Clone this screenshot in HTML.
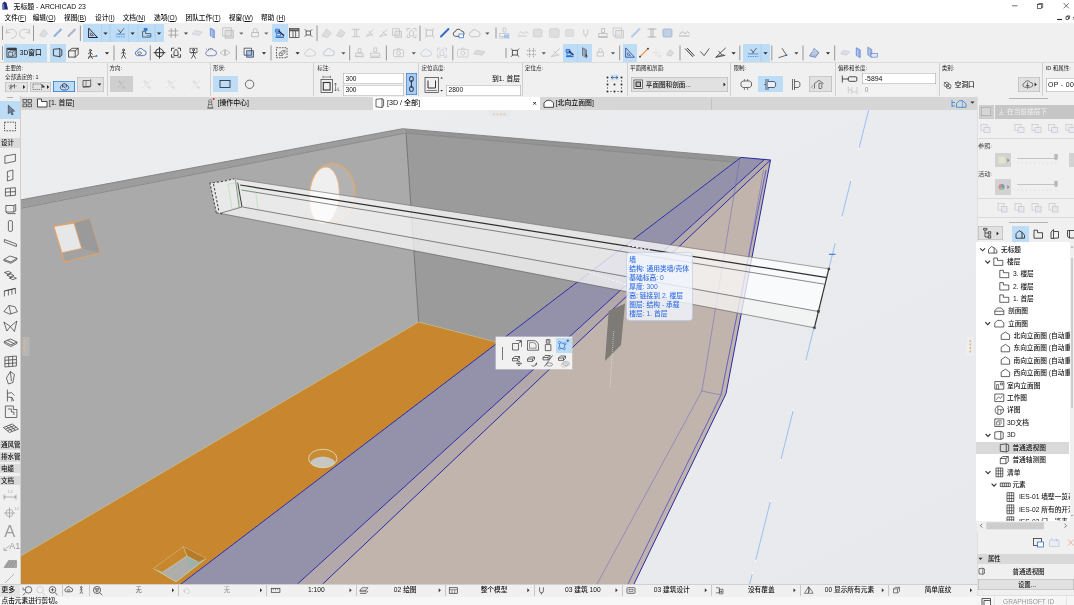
<!DOCTYPE html>
<html lang="zh"><head><meta charset="utf-8"><title>ARCHICAD 23</title><style>
html,body{margin:0;padding:0;background:#f0f0f0;}
body{width:1074px;height:605px;position:relative;overflow:hidden;font-family:"Liberation Sans","Noto Sans CJK SC",sans-serif;}
.r,.t,.abs{position:absolute;}
.t{white-space:nowrap;line-height:10px;height:10px;font-weight:500;}
.c{text-align:center;}
.rt{text-align:right;}
svg{display:block;}
#app{position:absolute;left:0;top:0;width:1074px;height:605px;overflow:hidden;filter:blur(0.3px);}
</style></head><body>
<div id="app">
<svg class="abs" style="left:0;top:0" width="1074" height="605" viewBox="0 0 1074 605">
<defs><clipPath id="vp"><rect x="20" y="110" width="957" height="474"/></clipPath><linearGradient id="sky" x1="0" y1="0" x2="1" y2="1"><stop offset="0" stop-color="#ecedef"/><stop offset="1" stop-color="#e7e9ec"/></linearGradient></defs>
<g clip-path="url(#vp)">
<rect x="20" y="110" width="957" height="474" fill="url(#sky)"/>
<polygon points="20,208 406,133 418.7,322 20,556.5" fill="#aaaaaa"/>
<polygon points="406,133 734.8,162.1 498,342.5 418.7,322" fill="#9b9b9b"/>
<polygon points="20,200 402.6,128.7 406,133 20,208" fill="#9d9d9d"/>
<polygon points="402.6,128.7 741,157.4 734.8,162.1 406,133" fill="#949494"/>
<polyline points="20,200 402.6,128.7 741,157.4" fill="none" stroke="#808080" stroke-width="0.9"/>
<polyline points="20,208.4 406,133 734.8,162.1" fill="none" stroke="#808080" stroke-width="0.8"/>
<line x1="406" y1="133" x2="418.7" y2="322" stroke="#6e6e6e" stroke-width="0.9"/>
<polygon points="418.7,322 498,342.5 181,584 20,584 20,556.5" fill="#c8862e"/>
<polyline points="20,556.5 418.7,322 498,342.5" fill="none" stroke="#c4c488" stroke-width="0.5"/>
<polygon points="770.5,160 726,393.7 634,584 321,584" fill="#c0b4ad"/>
<polygon points="741,157.4 764.7,159.2 297.5,584 181,584" fill="#9392aa"/>
<polygon points="764.7,159.2 770.5,160 322.7,584 297.5,584" fill="#b3a8aa"/>
<g fill="none" stroke="#2a2aa8" stroke-width="1.0">
<polyline points="181,584 741,157.4 770.5,160 726,393.7 634,584"/>
<line x1="764.7" y1="159.2" x2="297.5" y2="584"/>
<line x1="770.5" y1="160" x2="322.7" y2="584"/>
<polyline points="766,170 726,370 721,395 628,584" stroke-width="0.8" stroke="#4a4ac8"/>
</g>
<g fill="none" stroke="#6a62c0" stroke-width="0.5">
<polyline points="739.8,158.7 705.5,370 701.8,391 597,584"/>
<line x1="701.8" y1="391" x2="721" y2="395"/>
<line x1="763.5" y1="170" x2="741" y2="300"/>
</g>
<polygon points="608.7,311 625,303.6 621,345 605,361" fill="#7e7a76"/>
<line x1="613.7" y1="331" x2="610" y2="388" stroke="#eee" stroke-width="0.7" stroke-dasharray="0.8 1.2"/>
<polygon points="53.9,226.4 89.7,218.8 99.8,252.8 64.6,262.2" fill="#a2a2a2" stroke="#e8a060" stroke-width="1.1"/>
<polygon points="74,223.2 89.7,218.8 99.8,252.8 81.6,248.4" fill="#9a9a9a"/>
<polygon points="53.9,226.4 74,223.2 81.6,248.4 62,252.8" fill="#e6e7e8" stroke="#e8a060" stroke-width="0.8"/>
<ellipse cx="332.5" cy="192.8" rx="22.5" ry="29.2" fill="#b2b2b2" stroke="#e8a868" stroke-width="1.2"/>
<ellipse cx="324.3" cy="195.5" rx="14.8" ry="28.6" fill="#efefef" stroke="#e8b080" stroke-width="0.8" transform="rotate(4 324 196)"/>
<clipPath id="rh"><ellipse cx="322.8" cy="458.5" rx="14.2" ry="9.2"/></clipPath>
<ellipse cx="322.8" cy="458.5" rx="14.2" ry="9.2" fill="#c98a34"/>
<ellipse cx="322.8" cy="465" rx="13" ry="8.6" fill="#c6c6c2" clip-path="url(#rh)"/>
<ellipse cx="322.8" cy="458.5" rx="14.2" ry="9.2" fill="none" stroke="#dfe6c4" stroke-width="0.8"/>
<polygon points="153.5,568.5 183.4,546.8 206,558.5 176,581.8" fill="#adadab" stroke="#cfe0a8" stroke-width="0.7"/><polygon points="186.6,555 200.5,562.5 189,569" fill="#94b4ac" fill-opacity="0.75"/>
<polygon points="153.5,568.5 183.4,546.8 187,556 163,572" fill="#c8862e"/>
<polygon points="183.4,546.8 206,558.5 198,562 187,556" fill="#b87a28"/>
<polyline points="183.4,546.8 187,556 163,572" fill="none" stroke="#cfe8b8" stroke-width="0.5"/>
<line x1="187" y1="556" x2="198" y2="562" stroke="#cfe8b8" stroke-width="0.5"/>
<polygon points="210,183.2 234.5,178.8 828.8,268.9 814.4,327.8 220,213.3 216.3,212.7" fill="#ffffff" fill-opacity="0.74"/>
<polygon points="242.7,207 818.5,311.5 814.4,327.8 220,213.3" fill="#d0d2d0" fill-opacity="0.18"/>
<g fill="none" stroke="#3a3a3a" stroke-width="0.6">
<line x1="234.5" y1="178.8" x2="828.8" y2="268.9" stroke="#666" stroke-width="0.6"/>
<line x1="240.2" y1="185" x2="826.9" y2="277.6" stroke-width="1.25" stroke="#303030"/>
<line x1="241.5" y1="190" x2="824.5" y2="284.2"/>
<line x1="242.7" y1="207" x2="818.5" y2="311.5"/>
<line x1="220" y1="213.3" x2="814.4" y2="327.8" stroke="#555" stroke-width="0.6"/>
<line x1="828.8" y1="268.9" x2="814.4" y2="327.8" stroke="#333" stroke-width="1.2"/><g fill="#444"><rect x="828" y="268" width="1.8" height="1.8"/><rect x="817.6" y="310.6" width="1.8" height="1.8"/><rect x="813.4" y="327" width="1.8" height="1.8"/></g>
<line x1="237.7" y1="182.6" x2="242" y2="207" stroke-width="1"/>
<line x1="235.5" y1="180" x2="239.3" y2="208" stroke-width="0.5"/>
<polyline points="242,207 220,213.3" stroke-width="0.6"/>
</g>
<g fill="none" stroke="#4a4a4a" stroke-width="1.1" stroke-dasharray="2.4 1.7">
<polyline points="216.3,212.7 210,183.2 223.2,181.3 234.5,178.8"/>
<line x1="213.5" y1="184" x2="219" y2="212"/>
<line x1="216.3" y1="212.7" x2="222" y2="214"/>
<line x1="628" y1="245.5" x2="650" y2="250" stroke="#f4f4f4"/>
<line x1="589" y1="272" x2="628" y2="285.5" stroke="#f4f4f4"/>
</g>
<polygon points="228,184 237,183 240,207 232,209" fill="none" stroke="#8fd890" stroke-width="0.4"/>
<polyline points="241.5,190 256,193 258,212" fill="none" stroke="#8fd890" stroke-width="0.4"/>
<g stroke="#7aaaf4" stroke-width="0.7"><line x1="868.9" y1="109" x2="859.2" y2="147.6"/><line x1="850.9" y1="180.7" x2="841.9" y2="216.4"/><line x1="835.3" y1="243" x2="829.0" y2="268"/><line x1="813.9" y1="328" x2="805.8" y2="360.5"/><line x1="793.1" y1="411" x2="781.1" y2="459"/><line x1="770.3" y1="501.7" x2="755.8" y2="559.7"/><line x1="752.2" y1="574" x2="749.4" y2="585"/></g>
<g fill="#ffffff"><rect x="858.3" y="148.0" width="1.2" height="1.6"/><rect x="850.5" y="179.1" width="1.2" height="1.6"/><rect x="841.1" y="216.8" width="1.2" height="1.6"/><rect x="834.9" y="241.4" width="1.2" height="1.6"/><rect x="804.9" y="360.9" width="1.2" height="1.6"/><rect x="792.8" y="409.4" width="1.2" height="1.6"/><rect x="780.1999999999999" y="459.4" width="1.2" height="1.6"/><rect x="770.0" y="500.09999999999997" width="1.2" height="1.6"/><rect x="754.9" y="560.1" width="1.2" height="1.6"/><rect x="751.9" y="572.4" width="1.2" height="1.6"/></g>
<line x1="829" y1="254.3" x2="835.5" y2="254.3" stroke="#3a70e0" stroke-width="1.1"/>
<rect x="22.5" y="337" width="7" height="19" fill="#b6b6b6"/><rect x="966.5" y="337" width="7" height="19" fill="#eeeeee"/><g fill="#e0b888"><rect x="493" y="113.5" width="2" height="1.6"/><rect x="496.5" y="113.5" width="2" height="1.6"/><rect x="500" y="113.5" width="2" height="1.6"/><rect x="503.5" y="113.5" width="2" height="1.6"/><rect x="969.5" y="340" width="1.6" height="2"/><rect x="969.5" y="343.5" width="1.6" height="2"/><rect x="969.5" y="347" width="1.6" height="2"/><rect x="969.5" y="350.5" width="1.6" height="2"/><rect x="23.5" y="340" width="1.6" height="2"/><rect x="23.5" y="343.5" width="1.6" height="2"/><rect x="23.5" y="347" width="1.6" height="2"/><rect x="23.5" y="350.5" width="1.6" height="2"/></g>
<rect x="489" y="111" width="21" height="6" fill="#e4e4e4" opacity="0.5"/>
</g>
</svg>
<div class="r" style="left:0px;top:0px;width:1074px;height:23px;background:#fff;"></div>
<div class="r" style="left:0px;top:23px;width:1074px;height:73px;background:#f0f0f0;"></div>
<div class="r" style="left:0px;top:97.2px;width:1074px;height:12.8px;background:#d6d6d6;"></div>
<div class="r" style="left:0px;top:96px;width:20.5px;height:488px;background:#f0f0f0;"></div>
<div class="r" style="left:977px;top:96px;width:97px;height:509px;background:#f0f0f0;"></div>
<div class="r" style="left:0px;top:584px;width:977px;height:12.5px;background:#f0f0f0;"></div>
<div class="r" style="left:0px;top:596.5px;width:977px;height:8.5px;background:#f7f7f7;"></div>
<span class="t" style="left:13.5px;top:1.5px;font-size:6.9px;color:#111;">无标题 - ARCHICAD 23</span>
<span class="t" style="left:4.5px;top:13.2px;font-size:6.7px;color:#111;">文件(<u>F</u>)</span>
<span class="t" style="left:32.7px;top:13.2px;font-size:6.7px;color:#111;">编辑(<u>O</u>)</span>
<span class="t" style="left:64px;top:13.2px;font-size:6.7px;color:#111;">视图(<u>B</u>)</span>
<span class="t" style="left:95px;top:13.2px;font-size:6.7px;color:#111;">设计(<u>I</u>)</span>
<span class="t" style="left:122.7px;top:13.2px;font-size:6.7px;color:#111;">文档(<u>N</u>)</span>
<span class="t" style="left:154px;top:13.2px;font-size:6.7px;color:#111;">选项(<u>O</u>)</span>
<span class="t" style="left:185.5px;top:13.2px;font-size:6.7px;color:#111;">团队工作(<u>T</u>)</span>
<span class="t" style="left:228.8px;top:13.2px;font-size:6.7px;color:#111;">视窗(<u>W</u>)</span>
<span class="t" style="left:261px;top:13.2px;font-size:6.7px;color:#111;">帮助 (<u>H</u>)</span>
<div class="r" style="left:83.3px;top:24.3px;width:80.7px;height:17.7px;background:#bddcf5;"></div>
<div class="r" style="left:272.3px;top:24.3px;width:15.5px;height:17.7px;background:#bddcf5;"></div>
<div class="r" style="left:4.2px;top:44px;width:43px;height:17.5px;background:#bddcf5;"></div>
<span class="t" style="left:19.8px;top:47.7px;font-size:6.7px;color:#111;">3D窗口</span>
<div class="r" style="left:50px;top:44px;width:16.3px;height:17.5px;background:#bddcf5;"></div>
<div class="r" style="left:563px;top:44px;width:28.5px;height:17.5px;background:#bddcf5;"></div>
<div class="r" style="left:623px;top:44px;width:14px;height:17.5px;background:#bddcf5;"></div>
<div class="r" style="left:743px;top:44px;width:27px;height:17.5px;background:#bddcf5;"></div>
<div class="r" style="left:0px;top:62.3px;width:1074px;height:0.6px;background:#dcdcdc;"></div>
<span class="t" style="left:5px;top:62.8px;font-size:5.5px;color:#222;font-weight:400;">主要的:</span>
<span class="t" style="left:5px;top:72.2px;font-size:5.5px;color:#222;font-weight:400;">全部选定的: 1</span>
<div class="r" style="left:5px;top:81.5px;width:22.6px;height:10.5px;background:#e4e4e4;box-shadow:inset 0 0 0 0.6px #b4b4b4;"></div>
<div class="r" style="left:29.7px;top:81.5px;width:21.8px;height:10.5px;background:#e4e4e4;box-shadow:inset 0 0 0 0.6px #b4b4b4;"></div>
<div class="r" style="left:53.3px;top:81.2px;width:22.2px;height:11.2px;background:#bddcf5;box-shadow:inset 0 0 0 0.8px #2a7ad4;"></div>
<div class="r" style="left:76.7px;top:76.7px;width:27px;height:15.3px;background:#e1e1e1;box-shadow:inset 0 0 0 0.6px #b8b8b8;"></div>
<div class="r" style="left:106.6px;top:63px;width:0.6px;height:33px;background:#d0d0d0;"></div>
<span class="t" style="left:109.4px;top:62.8px;font-size:5.5px;color:#222;font-weight:400;">方向:</span>
<div class="r" style="left:110px;top:76px;width:23.2px;height:16px;background:#cfcfcf;"></div>
<div class="r" style="left:210px;top:63px;width:0.6px;height:33px;background:#d0d0d0;"></div>
<span class="t" style="left:213px;top:62.8px;font-size:5.5px;color:#222;font-weight:400;">形状:</span>
<div class="r" style="left:213px;top:76px;width:24.6px;height:16px;background:#bddcf5;"></div>
<div class="r" style="left:313px;top:63px;width:0.6px;height:33px;background:#d0d0d0;"></div>
<span class="t" style="left:317.3px;top:62.8px;font-size:5.5px;color:#222;font-weight:400;">标注:</span>
<div class="r" style="left:343px;top:73.2px;width:60.5px;height:10.6px;background:#fff;box-shadow:inset 0 0 0 0.6px #a8a8a8;"></div>
<div class="r" style="left:343px;top:84.6px;width:60.5px;height:11px;background:#fff;box-shadow:inset 0 0 0 0.6px #a8a8a8;"></div>
<span class="t" style="left:345.5px;top:73.7px;font-size:6.6px;color:#111;">300</span>
<span class="t" style="left:345.5px;top:85.3px;font-size:6.6px;color:#111;">300</span>
<div class="r" style="left:405.7px;top:73.3px;width:11.5px;height:22px;background:#a9cdf0;box-shadow:inset 0 0 0 0.7px #3c82d0;"></div>
<div class="r" style="left:418px;top:63px;width:0.6px;height:33px;background:#d0d0d0;"></div>
<span class="t" style="left:421.6px;top:62.8px;font-size:5.5px;color:#222;font-weight:400;">定位高度:</span>
<span class="t rt" style="left:400px;width:120px;top:73.8px;font-size:6.8px;color:#111;">到1. 首层</span>
<div class="r" style="left:446px;top:84.6px;width:74.5px;height:11px;background:#fff;box-shadow:inset 0 0 0 0.6px #a8a8a8;"></div>
<span class="t" style="left:448.5px;top:85.3px;font-size:6.6px;color:#111;">2800</span>
<div class="r" style="left:522px;top:63px;width:0.6px;height:33px;background:#d0d0d0;"></div>
<span class="t" style="left:525px;top:62.8px;font-size:5.5px;color:#222;font-weight:400;">定位点:</span>
<div class="r" style="left:626.7px;top:63px;width:0.6px;height:33px;background:#d0d0d0;"></div>
<span class="t" style="left:630px;top:62.8px;font-size:5.5px;color:#222;font-weight:400;">平面图和剖面:</span>
<div class="r" style="left:630.5px;top:76.7px;width:97.5px;height:15.8px;background:#e1e1e1;box-shadow:inset 0 0 0 0.6px #b4b4b4;"></div>
<span class="t" style="left:645.8px;top:79.6px;font-size:6.6px;color:#111;">平面图和剖面...</span>
<div class="r" style="left:730.3px;top:63px;width:0.6px;height:33px;background:#d0d0d0;"></div>
<span class="t" style="left:733.6px;top:62.8px;font-size:5.5px;color:#222;font-weight:400;">限制:</span>
<div class="r" style="left:758px;top:76px;width:24.6px;height:16px;background:#bddcf5;"></div>
<div class="r" style="left:808.5px;top:76px;width:23.2px;height:16px;background:#e1e1e1;box-shadow:inset 0 0 0 0.6px #b4b4b4;"></div>
<div class="r" style="left:834.7px;top:63px;width:0.6px;height:33px;background:#d0d0d0;"></div>
<span class="t" style="left:838px;top:62.8px;font-size:5.5px;color:#222;font-weight:400;">偏移和长度:</span>
<div class="r" style="left:862.3px;top:73.2px;width:74px;height:10.6px;background:#fff;box-shadow:inset 0 0 0 0.6px #a8a8a8;"></div>
<div class="r" style="left:862.3px;top:84.6px;width:74px;height:11px;background:#f3f3f3;"></div>
<span class="t" style="left:864.8px;top:73.7px;font-size:6.9px;color:#111;">-5894</span>
<span class="t" style="left:864.8px;top:85.3px;font-size:6.6px;color:#999;">0</span>
<div class="r" style="left:939px;top:63px;width:0.6px;height:33px;background:#d0d0d0;"></div>
<span class="t" style="left:941.8px;top:62.8px;font-size:5.5px;color:#222;font-weight:400;">类别:</span>
<span class="t" style="left:954.8px;top:79.8px;font-size:6.6px;color:#111;">空洞口</span>
<div class="r" style="left:1018px;top:76.7px;width:21.5px;height:15.5px;background:#e1e1e1;box-shadow:inset 0 0 0 0.6px #b4b4b4;"></div>
<div class="r" style="left:1042px;top:63px;width:0.6px;height:33px;background:#d0d0d0;"></div>
<span class="t" style="left:1045.8px;top:62.8px;font-size:5.5px;color:#222;font-weight:400;">ID 和属性:</span>
<div class="r" style="left:1045.8px;top:78px;width:30px;height:14px;background:#fff;box-shadow:inset 0 0 0 0.6px #a8a8a8;"></div>
<span class="t" style="left:1048px;top:80px;font-size:6.9px;color:#111;letter-spacing:0.35px;">OP - 003</span>
<div class="r" style="left:373px;top:97.2px;width:167px;height:12.8px;background:#fff;"></div>
<div class="r" style="left:711px;top:97.5px;width:0.6px;height:12.3px;background:#c2c2c2;"></div>
<span class="t" style="left:49px;top:98.4px;font-size:6.9px;color:#111;">[1. 首层]</span>
<span class="t" style="left:217.5px;top:98.4px;font-size:6.9px;color:#111;">[操作中心]</span>
<span class="t" style="left:387px;top:98.4px;font-size:7.1px;color:#111;">[3D / 全部]</span>
<span class="t" style="left:555.6px;top:98.4px;font-size:6.9px;color:#111;">[北向立面图]</span>
<div class="r" style="left:20.2px;top:96px;width:0.6px;height:488px;background:#cfcfcf;"></div>
<div class="r" style="left:7px;top:97.3px;width:6px;height:0.7px;background:#b0b0b0;"></div>
<div class="r" style="left:0px;top:101px;width:20px;height:18.4px;background:#bddcf5;"></div>
<div class="r" style="left:0px;top:138.4px;width:20px;height:9.4px;background:#dadada;"></div>
<span class="t" style="left:1px;top:138.29999999999998px;font-size:6.5px;color:#111;max-width:19.3px;overflow:hidden;">设计</span>
<div class="r" style="left:0px;top:440.3px;width:20px;height:9.3px;background:#dadada;"></div>
<span class="t" style="left:1px;top:440.15px;font-size:6.5px;color:#111;max-width:19.3px;overflow:hidden;">通风管</span>
<div class="r" style="left:0px;top:452.3px;width:20px;height:9.3px;background:#dadada;"></div>
<span class="t" style="left:1px;top:452.15px;font-size:6.5px;color:#111;max-width:19.3px;overflow:hidden;">排水管</span>
<div class="r" style="left:0px;top:464.2px;width:20px;height:9.3px;background:#dadada;"></div>
<span class="t" style="left:1px;top:464.04999999999995px;font-size:6.5px;color:#111;max-width:19.3px;overflow:hidden;">电缆</span>
<div class="r" style="left:0px;top:476.1px;width:20px;height:9.3px;background:#dadada;"></div>
<span class="t" style="left:1px;top:475.95px;font-size:6.5px;color:#111;max-width:19.3px;overflow:hidden;">文档</span>
<span class="t" style="left:8px;top:487.3px;font-size:3.2px;color:#999;">1.2</span>
<span class="t" style="left:14.5px;top:503.5px;font-size:3px;color:#999;">1.2</span>
<span class="t" style="left:4.2px;top:526.2px;font-size:16.5px;color:#9c9c9c;font-weight:400;">A</span>
<span class="t" style="left:9.3px;top:541px;font-size:9px;color:#9a9a9a;font-weight:400;">A1</span>
<div class="r" style="left:976.6px;top:96px;width:0.6px;height:509px;background:#e0e0e0;"></div>
<div class="r" style="left:1009px;top:98px;width:39px;height:0.7px;background:#b4b4b4;"></div>
<div class="r" style="left:979px;top:104.7px;width:15px;height:14px;background:#cdcdcd;"></div>
<div class="r" style="left:981.3px;top:106.6px;width:9.6px;height:9.6px;background:#d6d6d6;box-shadow:inset 0 0 0 0.7px #aaa;"></div>
<div class="r" style="left:995px;top:104.7px;width:79px;height:14px;background:#c6c6c6;"></div>
<span class="t" style="left:1007px;top:106.7px;font-size:6.7px;color:#f0f0f0;font-weight:400;">在当前楼层下</span>
<div class="r" style="left:977px;top:138.2px;width:97px;height:0.6px;background:#dadada;"></div>
<span class="t" style="left:978px;top:140.6px;font-size:6.2px;color:#444;font-weight:400;">参照:</span>
<div class="r" style="left:995px;top:152.7px;width:16px;height:14.8px;background:#d2d2d2;"></div>
<div class="r" style="left:1069px;top:152.7px;width:5px;height:14.8px;background:#d2d2d2;"></div>
<div class="r" style="left:1017px;top:157.5px;width:40px;height:0.8px;background:#c4c4c4;"></div>
<span class="t" style="left:978px;top:168.8px;font-size:6.2px;color:#444;font-weight:400;">活动:</span>
<div class="r" style="left:995px;top:179.2px;width:16px;height:15.4px;background:#d2d2d2;"></div>
<div class="r" style="left:1017px;top:184.3px;width:40px;height:0.8px;background:#c4c4c4;"></div>
<div class="r" style="left:977px;top:198px;width:97px;height:0.6px;background:#dadada;"></div>
<div class="r" style="left:977px;top:217px;width:97px;height:0.6px;background:#dadada;"></div>
<div class="r" style="left:1009px;top:221.6px;width:39px;height:0.7px;background:#b4b4b4;"></div>
<div class="r" style="left:978px;top:226.3px;width:24.5px;height:14px;background:#e1e1e1;box-shadow:inset 0 0 0 0.6px #b4b4b4;"></div>
<div class="r" style="left:1012px;top:225.5px;width:17px;height:16px;background:#bddcf5;"></div>
<div class="r" style="left:976.4px;top:242.4px;width:93.6px;height:279px;background:#fff;"></div>
<div class="r" style="left:1070px;top:242.4px;width:4px;height:279px;background:#f0f0f0;"></div>
<div class="r" style="left:1070.6px;top:258px;width:2.8px;height:150px;background:#cdcdcd;"></div>
<div class="r" style="left:975.9px;top:441.6px;width:93.6px;height:12.3px;background:#d9d9d9;"></div>
<span class="t" style="left:1001px;top:244.7px;font-size:6.7px;color:#111;max-width:68.5px;overflow:hidden;">无标题</span>
<span class="t" style="left:1007px;top:257.0px;font-size:6.7px;color:#111;max-width:62.5px;overflow:hidden;">楼层</span>
<span class="t" style="left:1013px;top:269.3px;font-size:6.7px;color:#111;max-width:56.5px;overflow:hidden;">3. 楼层</span>
<span class="t" style="left:1013px;top:281.59999999999997px;font-size:6.7px;color:#111;max-width:56.5px;overflow:hidden;">2. 楼层</span>
<span class="t" style="left:1013px;top:293.9px;font-size:6.7px;color:#111;max-width:56.5px;overflow:hidden;">1. 首层</span>
<span class="t" style="left:1008px;top:306.2px;font-size:6.7px;color:#111;max-width:61.5px;overflow:hidden;">剖面图</span>
<span class="t" style="left:1008px;top:318.59999999999997px;font-size:6.7px;color:#111;max-width:61.5px;overflow:hidden;">立面图</span>
<span class="t" style="left:1013.5px;top:331.0px;font-size:6.7px;color:#111;max-width:56.0px;overflow:hidden;">北向立面图 (自动重</span>
<span class="t" style="left:1013.5px;top:343.4px;font-size:6.7px;color:#111;max-width:56.0px;overflow:hidden;">东向立面图 (自动重</span>
<span class="t" style="left:1013.5px;top:355.8px;font-size:6.7px;color:#111;max-width:56.0px;overflow:hidden;">南向立面图 (自动重</span>
<span class="t" style="left:1013.5px;top:368.2px;font-size:6.7px;color:#111;max-width:56.0px;overflow:hidden;">西向立面图 (自动重</span>
<span class="t" style="left:1007px;top:380.59999999999997px;font-size:6.7px;color:#111;max-width:62.5px;overflow:hidden;">室内立面图</span>
<span class="t" style="left:1007px;top:393.0px;font-size:6.7px;color:#111;max-width:62.5px;overflow:hidden;">工作图</span>
<span class="t" style="left:1007px;top:405.4px;font-size:6.7px;color:#111;max-width:62.5px;overflow:hidden;">详图</span>
<span class="t" style="left:1007px;top:417.9px;font-size:6.7px;color:#111;max-width:62.5px;overflow:hidden;">3D文档</span>
<span class="t" style="left:1007px;top:430.4px;font-size:6.7px;color:#111;max-width:62.5px;overflow:hidden;">3D</span>
<span class="t" style="left:1012.4px;top:442.9px;font-size:6.7px;color:#111;max-width:57.10000000000002px;overflow:hidden;">普通透视图</span>
<span class="t" style="left:1012.4px;top:455.3px;font-size:6.7px;color:#111;max-width:57.10000000000002px;overflow:hidden;">普通轴测图</span>
<span class="t" style="left:1007px;top:467.59999999999997px;font-size:6.7px;color:#111;max-width:62.5px;overflow:hidden;">清单</span>
<span class="t" style="left:1012.4px;top:480.0px;font-size:6.7px;color:#111;max-width:57.10000000000002px;overflow:hidden;">元素</span>
<span class="t" style="left:1019px;top:492.3px;font-size:6.7px;color:#111;max-width:50.5px;overflow:hidden;">IES-01 墙壁一览表</span>
<span class="t" style="left:1019px;top:504.5px;font-size:6.7px;color:#111;max-width:50.5px;overflow:hidden;">IES-02 所有的开洞</span>
<span class="t" style="left:1019px;top:516.5px;font-size:6.7px;color:#111;max-width:50.5px;overflow:hidden;">IES-03 门一览表</span>
<div class="r" style="left:977px;top:553.8px;width:97px;height:9.8px;background:#d9d9d9;"></div>
<span class="t" style="left:988px;top:553.8px;font-size:6.3px;color:#111;">属性</span>
<span class="t c" style="left:968.5px;width:120px;top:566.6px;font-size:6.4px;color:#111;">普通透视图</span>
<div class="r" style="left:977.5px;top:578.6px;width:96px;height:11.6px;background:#e1e1e1;box-shadow:inset 0 0 0 0.6px #b4b4b4;"></div>
<span class="t c" style="left:967px;width:120px;top:579.6px;font-size:6.4px;color:#111;">设置...</span>
<div class="r" style="left:977px;top:595.2px;width:97px;height:9.8px;background:#f6f6f6;"></div>
<div class="r" style="left:977px;top:595px;width:97px;height:0.6px;background:#e0e0e0;"></div>
<div class="r" style="left:993.6px;top:596px;width:0.6px;height:9px;background:#e4e4e4;"></div>
<div class="r" style="left:1066px;top:596px;width:0.6px;height:9px;background:#e4e4e4;"></div>
<span class="t" style="left:1003px;top:596.6px;font-size:6.6px;color:#9a9a9a;">GRAPHISOFT ID</span>
<div class="r" style="left:0px;top:584px;width:977px;height:0.6px;background:#d0d0d0;"></div>
<div class="r" style="left:0px;top:584.5px;width:19.5px;height:12px;background:#e4e4e4;"></div>
<span class="t" style="left:1.2px;top:585.3px;font-size:7px;color:#111;">更多</span>
<div class="r" style="left:61.5px;top:585px;width:0.6px;height:11px;background:#c8c8c8;"></div>
<div class="r" style="left:89px;top:585px;width:0.6px;height:11px;background:#c8c8c8;"></div>
<span class="t c" style="left:78.69999999999999px;width:120px;top:585.3px;font-size:6.4px;color:#777;">无</span>
<div class="r" style="left:177.5px;top:585px;width:0.6px;height:11px;background:#c8c8c8;"></div>
<span class="t c" style="left:167px;width:120px;top:585.3px;font-size:6.4px;color:#999;">无</span>
<div class="r" style="left:265.8px;top:585px;width:0.6px;height:11px;background:#c8c8c8;"></div>
<span class="t c" style="left:256.3px;width:120px;top:585.3px;font-size:6.7px;color:#111;">1:100</span>
<div class="r" style="left:355.5px;top:585px;width:0.6px;height:11px;background:#c8c8c8;"></div>
<span class="t c" style="left:345.2px;width:120px;top:585.3px;font-size:6.7px;color:#111;">02 绘图</span>
<div class="r" style="left:444.8px;top:585px;width:0.6px;height:11px;background:#c8c8c8;"></div>
<span class="t c" style="left:434px;width:120px;top:585.3px;font-size:6.7px;color:#111;">整个模型</span>
<div class="r" style="left:534px;top:585px;width:0.6px;height:11px;background:#c8c8c8;"></div>
<span class="t c" style="left:522.8px;width:120px;top:585.3px;font-size:6.7px;color:#111;">03 建筑 100</span>
<div class="r" style="left:621.5px;top:585px;width:0.6px;height:11px;background:#c8c8c8;"></div>
<span class="t c" style="left:611.8px;width:120px;top:585.3px;font-size:6.7px;color:#111;">03 建筑设计</span>
<div class="r" style="left:710.8px;top:585px;width:0.6px;height:11px;background:#c8c8c8;"></div>
<span class="t c" style="left:701.3px;width:120px;top:585.3px;font-size:6.7px;color:#111;">没有覆盖</span>
<div class="r" style="left:799.6px;top:585px;width:0.6px;height:11px;background:#c8c8c8;"></div>
<span class="t c" style="left:789.4px;width:120px;top:585.3px;font-size:6.7px;color:#111;">00 显示所有元素</span>
<div class="r" style="left:887.8px;top:585px;width:0.6px;height:11px;background:#c8c8c8;"></div>
<span class="t c" style="left:878px;width:120px;top:585.3px;font-size:6.7px;color:#111;">简单底纹</span>
<span class="t" style="left:1.5px;top:596px;font-size:6.7px;color:#111;">点击元素进行剪切。</span>
<div class="r" style="left:496px;top:337.4px;width:76px;height:32px;background:#f1f1f1;box-shadow:0 0 0 0.5px #d8d8d8;"></div>
<div class="r" style="left:556px;top:338px;width:16px;height:14.5px;background:#bddcf5;"></div>
<div class="r" style="left:501.8px;top:347px;width:0.7px;height:13px;background:#777;"></div>
<div class="r" style="left:627px;top:253px;width:64.5px;height:67px;background:rgba(240,244,252,0.84);border-radius:2.5px;box-shadow:0 0 0 0.7px #c0d0ee;"></div>
<span class="t" style="left:629.3px;top:255.2px;font-size:6.75px;color:#3570e4;">墙</span>
<span class="t" style="left:629.3px;top:264.13px;font-size:6.75px;color:#3570e4;">结构: 通用类墙/壳体</span>
<span class="t" style="left:629.3px;top:273.06px;font-size:6.75px;color:#3570e4;">基础标高: 0</span>
<span class="t" style="left:629.3px;top:281.99px;font-size:6.75px;color:#3570e4;">厚度: 300</span>
<span class="t" style="left:629.3px;top:290.91999999999996px;font-size:6.75px;color:#3570e4;">高: 链接到 2. 楼层</span>
<span class="t" style="left:629.3px;top:299.84999999999997px;font-size:6.75px;color:#3570e4;">图层: 结构 - 承载</span>
<span class="t" style="left:629.3px;top:308.78px;font-size:6.75px;color:#3570e4;">楼层: 1. 首层</span>
<svg class="abs" style="left:0;top:0;pointer-events:none" width="1074" height="605" viewBox="0 0 1074 605">
<path d="M2.5,9.5 L2.5,3.5 L4.5,1.5 L6.5,3 L8,9.5 Z" fill="#1c2a6c"/><path d="M2.5,9.5 L2.5,5 L4.2,3.6 L4.6,9.5Z" fill="#5a78c8"/>
<g stroke="#333" stroke-width="0.7" fill="none"><line x1="1012" y1="5.8" x2="1017.5" y2="5.8"/><rect x="1037.5" y="4.6" width="4" height="4"/><path d="M1038.7,4.6v-1.1h4v4h-1.2"/><path d="M1063.6,3.1l5.2,5.2m0,-5.2l-5.2,5.2"/></g>
<g stroke="#222" stroke-width="0.7" fill="none"><line x1="1057.2" y1="19.5" x2="1062" y2="19.5" stroke-width="1.1"/><path d="M1073,17l1.5,1.5M1073,19.5l1.5,-1.5"/><rect x="1066" y="16.8" width="2.6" height="2.6"/><path d="M1067,16.8v-0.9h2.6v2.6h-1"/></g>
<g fill="#8c8c8c"><rect x="2.1" y="26" width="0.9" height="14"/><rect x="2.1" y="46" width="0.9" height="14"/></g>
<g fill="none" stroke="#c2c2c2" stroke-width="0.8" stroke-linecap="round" stroke-linejoin="round"><path d="M6.3,33 l0.3,-4 M6.3,33 l3.8,-0.6 M6.5,32.8 a5,4.6 0 1 1 5,5.6"/></g>
<g fill="none" stroke="#c2c2c2" stroke-width="0.8" stroke-linecap="round" stroke-linejoin="round"><path d="M29.7,33 l-0.3,-4 M29.7,33 l-3.8,-0.6 M29.5,32.8 a5,4.6 0 1 0 -5,5.6"/></g>
<line x1="33.5" y1="25.5" x2="33.5" y2="41" stroke="#8c8c8c" stroke-width="0.9"/>
<path d="M39.5,35.5 L43.5,29.5 L47.5,33 L44.5,37.0 Z" fill="#c0c4cc" fill-opacity="0.4" stroke="#c0c4cc" stroke-width="0.6"/>
<g stroke="#8eaee0" stroke-width="2" stroke-linecap="round"><line x1="54.5" y1="36.0" x2="60" y2="30.5"/></g><circle cx="60.8" cy="29.7" r="1.1" fill="#8eaee0"/>
<g stroke="#aab4c8" stroke-width="2" stroke-linecap="round"><line x1="68.5" y1="36.0" x2="74" y2="30.5"/></g><circle cx="74.8" cy="29.7" r="1.1" fill="#aab4c8"/>
<line x1="80.4" y1="25.5" x2="80.4" y2="41" stroke="#8c8c8c" stroke-width="0.9"/>
<g stroke="#a6cbea" stroke-width="0.6"><line x1="101.5" y1="24.3" x2="101.5" y2="42"/><line x1="110" y1="24.3" x2="110" y2="42"/><line x1="128.5" y1="24.3" x2="128.5" y2="42"/><line x1="137.8" y1="24.3" x2="137.8" y2="42"/><line x1="155" y1="24.3" x2="155" y2="42"/></g>
<g fill="none" stroke="#223" stroke-width="1.0" stroke-linecap="round" stroke-linejoin="round"><path d="M89,28.5 L97.5,37.5 H89 Z"/><path d="M91,33.2 L93.6,35.6 H91 Z" stroke-width="0.6"/></g>
<path d="M103.4,32.5h4.2l-2.1,2.3z" fill="#222"/>
<g fill="none" stroke-width="0.7"><path d="M116.1,34.2h8.800000000000011" stroke="#2f6fd0"/><path d="M116.1,36.8h8.800000000000011" stroke="#2f6fd0" stroke-dasharray="1.4 1"/><path d="M119.5,33.8 l4.5,-5.5" stroke="#333"/><path d="M118.0,29.5 l3,3.5" stroke="#333"/></g>
<path d="M130.5,32.5h4.2l-2.1,2.3z" fill="#222"/>
<g fill="none" stroke="#333" stroke-width="0.7"><path d="M142.6,31.39999999999999 v5.700000000000017 h8.200000000000017 v-3.5 h-5.200000000000017 v-2.5z"/><path d="M144.1,28.39999999999999h3v2h-3z" fill="#2f6fd0" stroke="#2f6fd0"/><path d="M146.6,35.7h3.5" stroke="#2f6fd0"/></g>
<path d="M156.9,32.5h4.2l-2.1,2.3z" fill="#222"/>
<g fill="none" stroke="#9a9a9a" stroke-width="0.8" stroke-linecap="round" stroke-linejoin="round"><path d="M171.2,28.39999999999999v9.200000000000017M175.4,28.39999999999999v9.200000000000017M168.7,30.89999999999999h9.200000000000017M168.7,35.10000000000001h9.200000000000017"/></g>
<path d="M183.9,32.5h4.2l-2.1,2.3z" fill="#444"/>
<path d="M192,34 L195,30.5 L202,32 L199,35.5 Z" fill="#c4c0d0" fill-opacity="0.35" stroke="#c4c0d0" stroke-width="0.5"/>
<path d="M210.35,28 l4,2.2 v7.8 l-4,-2.2 z" fill="#4a78d8" fill-opacity="0.55" stroke="#4a78d8" stroke-width="0.6"/><path d="M211.75,30v7" stroke="#fff" stroke-width="0.4"/>
<g fill="none" stroke="#b8b8b8" stroke-width="0.8" stroke-linecap="round" stroke-linejoin="round"><rect x="223.0" y="27.849999999999994" width="8.300000000000011" height="8.300000000000011"/><rect x="225.5" y="30.349999999999994" width="7.800000000000011" height="7.800000000000011" fill="#c0c0c0" fill-opacity="0.35"/></g>
<path d="M239.20000000000002,32.5h4.2l-2.1,2.3z" fill="#666"/>
<g fill="none" stroke="#b4b4b4" stroke-width="0.8" stroke-linecap="round" stroke-linejoin="round"><rect x="252" y="32.5" width="6.5" height="4.25"/><path d="M253.3,32.5 v-2 a1.9500000000000002,1.9500000000000002 0 0 1 3.9000000000000004,0 v2"/></g>
<path d="M264.2,32.5h4.2l-2.1,2.3z" fill="#666"/>
<g fill="none" stroke="#2f6fd0" stroke-width="0.8"><path d="M275.5,29.25 h4 v3 h-4z" fill="#2f6fd0" fill-opacity="0.5"/><path d="M278.5,30.75 l5.5,5.0" stroke="#224" stroke-width="1.3"/><path d="M275.5,37.25h8.5" stroke-width="1.4"/><path d="M276.5,33.5h4v2.4h-4z" /></g>
<g fill="none" stroke="#333" stroke-width="0.7"><rect x="289.5" y="28.5" width="9.5" height="9"/><path d="M289.5,30.8h9.5M293,31v6.5M295.6,31v6.5"/><path d="M289.5,30h9.5" stroke-width="1.2"/></g>
<g fill="none" stroke="#333" stroke-width="0.7" stroke-linecap="round" stroke-linejoin="round"><rect x="306.5" y="31.0" width="4.0" height="4.0"/><path d="M305.0,29.5l1.5,1.5M312.0,29.5l-1.5,1.5M305.0,36.5l1.5,-1.5M312.0,36.5l-1.5,-1.5"/></g>
<line x1="317" y1="25.5" x2="317" y2="41" stroke="#8c8c8c" stroke-width="0.9"/>
<path d="M322.0,36.05000000000001 L326.55,28.94999999999999 L331.1,33 L327.55,37.55000000000001 Z" fill="#c2c2c2" fill-opacity="0.4" stroke="#c2c2c2" stroke-width="0.6"/>
<path d="M336.5,35.69999999999999 L340.7,29.30000000000001 L344.9,33 L341.7,37.19999999999999 Z" fill="#c2c2c2" fill-opacity="0.4" stroke="#c2c2c2" stroke-width="0.6"/>
<g fill="none" stroke="#c2c2c2" stroke-width="0.8" stroke-linecap="round" stroke-linejoin="round"><path d="M352,29.25h7.5M352,36.75h7.5M354.75,29.25v7.5M356.75,29.25v7.5"/></g>
<g fill="none" stroke="#c2c2c2" stroke-width="0.8" stroke-linecap="round" stroke-linejoin="round"><path d="M373.1,29.69999999999999 L366,36.30000000000001 L372.6,34.30000000000001 M369,31.5 l3.5,4"/></g>
<g fill="none" stroke="#c2c2c2" stroke-width="0.8" stroke-linecap="round" stroke-linejoin="round"><path d="M387.1,29.5 L379.6,36.5 L386.6,34.5 M382.6,31.5 l3.5,4"/></g>
<g fill="none" stroke="#c2c2c2" stroke-width="0.8" stroke-linecap="round" stroke-linejoin="round"><rect x="392.9" y="28.69999999999999" width="6.600000000000023" height="6.600000000000023"/><rect x="395.4" y="31.19999999999999" width="6.100000000000023" height="6.100000000000023" fill="#d0d0d0" fill-opacity="0.35"/></g>
<g fill="none" stroke="#c2c2c2" stroke-width="0.8" stroke-linecap="round" stroke-linejoin="round"><path d="M407.0,31.0v-2.5h2.5M413.5,28.5h2.5v2.5M416.0,35.0v2.5h-2.5M409.5,37.5h-2.5v-2.5"/><path d="M409.5,35.5 v-3.5 l2.0,-2.5 l2.0,2.5 v3.5 z"/></g>
<line x1="420" y1="25.5" x2="420" y2="41" stroke="#8c8c8c" stroke-width="0.9"/>
<g fill="none" stroke="#b8b8b8" stroke-width="0.8" stroke-linecap="round" stroke-linejoin="round"><rect x="426.6" y="30.0" width="6.0" height="6.0"/><path d="M425.1,28.5l1.5,1.5M434.1,28.5l-1.5,1.5M425.1,37.5l1.5,-1.5M434.1,37.5l-1.5,-1.5"/></g>
<g stroke="#3a68c8" stroke-width="2" stroke-linecap="round"><line x1="441.0" y1="36.5" x2="447.5" y2="30.0"/></g><circle cx="448.3" cy="29.2" r="1.1" fill="#3a68c8"/>
<g fill="none" stroke="#333" stroke-width="0.8" stroke-linecap="round" stroke-linejoin="round"><path d="M455.0,36.25 a2.4,2.4 0 0 1 0.3,-4.7 a3.2,3.2 0 0 1 6,-0.6 a2.6,2.6 0 0 1 0.2,5.3 z"/></g>
<rect x="459" y="34" width="4.5" height="3.8" fill="#fff" stroke="#2f6fd0" stroke-width="0.7"/>
<g fill="none" stroke="#b8b8c4" stroke-width="0.8" stroke-linecap="round" stroke-linejoin="round"><path d="M471.1,36.69999999999999 a2.4,2.4 0 0 1 0.3,-4.7 a3.2,3.2 0 0 1 6,-0.6 a2.6,2.6 0 0 1 0.2,5.3 z"/></g>
<path d="M485.29999999999995,32.5h4.2l-2.1,2.3z" fill="#555"/>
<line x1="496" y1="27.5" x2="496" y2="38.5" stroke="#8c8c8c" stroke-width="0.9"/>
<g fill="none" stroke="#c0c4cc" stroke-width="0.8" stroke-linecap="round" stroke-linejoin="round"><path d="M503.5,28.0h2.5v4h-2.5z M500,33.5h9v3h-9z M499.5,38.0h10"/></g>
<rect x="504" y="34.5" width="5" height="3.5" fill="#a8c4ec"/>
<g fill="none" stroke="#c4c4c4" stroke-width="0.8" stroke-linecap="round" stroke-linejoin="round"><path d="M518.6,34 l2.5,-2.5 l2.5,2.5 l2.5,-2.5 l2,2 M518.1,36h8.399999999999977" /></g>
<rect x="533.2" y="29.100000000000023" width="8.799999999999955" height="7.7999999999999545" rx="1.5" fill="#c8c8c8" fill-opacity="0.45" stroke="#c8c8c8" stroke-width="0.6"/>
<rect x="549.5" y="28.69999999999999" width="9.600000000000023" height="8.600000000000023" rx="1.5" fill="#c8c8c8" fill-opacity="0.45" stroke="#c8c8c8" stroke-width="0.6"/>
<rect x="565.5" y="29.5" width="8" height="7" rx="1.5" fill="#cccccc" fill-opacity="0.45" stroke="#cccccc" stroke-width="0.6"/>
<g fill="none" stroke="#c0c0c0" stroke-width="0.8" stroke-linecap="round" stroke-linejoin="round"><path d="M583.75,29.75 v3.5 a2,2 0 0 0 4,0 v-3.5 M585.75,35.25v1.5"/></g>
<g fill="none" stroke="#b8b8b8" stroke-width="0.8" stroke-linecap="round" stroke-linejoin="round"><path d="M602.0,28.5h2.5v4h-2.5z M599,33.5h8v3h-8z M598.5,37.5h9"/></g>
<g fill="none" stroke="#c4c4c4" stroke-width="0.8" stroke-linecap="round" stroke-linejoin="round"><rect x="613.5" y="28.0" width="8" height="8"/><rect x="616" y="30.5" width="7.5" height="7.5" fill="#d8d8d8" fill-opacity="0.35"/></g>
<g stroke="#b4c8e8" stroke-width="2" stroke-linecap="round"><line x1="632.0" y1="36.5" x2="638.5" y2="30.0"/></g><circle cx="639.3" cy="29.2" r="1.1" fill="#b4c8e8"/>
<g fill="none" stroke="#a8a8a8" stroke-width="0.8" stroke-linecap="round" stroke-linejoin="round"><path d="M648,29.0h8M648,37.0h8M651.0,29.0v8M653.0,29.0v8"/></g>
<rect x="662.9" y="28.94999999999999" width="9.100000000000023" height="8.100000000000023" rx="1.5" fill="#8aa4d0" fill-opacity="0.45" stroke="#8aa4d0" stroke-width="0.6"/>
<g fill="none" stroke="#a8a8a8" stroke-width="0.8" stroke-linecap="round" stroke-linejoin="round"><path d="M679.8,34 l2.5,-2.5 l2.5,2.5 l2.5,-2.5 l2,2 M679.3,36h9.800000000000068" /></g>
<g fill="none" stroke="#222" stroke-width="0.8" stroke-linecap="round" stroke-linejoin="round"><rect x="7.3" y="48.2" width="9.0" height="9.0"/></g>
<rect x="7.3" y="48.2" width="9" height="1.8" fill="#333"/>
<path d="M8.6,56.2v-4l2.6,-2h4v4l-2.6,2z M8.6,52.2h4v4 M12.6,52.2l2.6,-2" fill="none" stroke="#333" stroke-width="0.6"/>
<g fill="none" stroke="#222" stroke-width="0.8" stroke-linecap="round" stroke-linejoin="round"><path d="M53.8,49.2 L59.8,48.7 V56.7 L53.8,55.7 Z M59.8,48.7 l2,1.2 V55.2 l-2,1.5"/></g>
<g fill="none" stroke="#333" stroke-width="0.8" stroke-linecap="round" stroke-linejoin="round"><path d="M68.9,50.800000000000004 l3,-2.5 h6.299999999999997 v6.299999999999997 l-3,2.5 h-6.299999999999997 z M68.9,50.800000000000004 h6.299999999999997 v6.299999999999997 M75.2,50.800000000000004 l3,-2.5"/></g>
<g fill="none" stroke="#333" stroke-width="0.8" stroke-linecap="round" stroke-linejoin="round"><circle cx="90.4" cy="50.4" r="1"/><path d="M90.4,51.6 v3.5 l-2,3.5 M90.4,55.1 l2,3.5 M88.4,53.6 l2,-1.2 l2,1.8"/></g>
<path d="M88,57.2l8,-1" stroke="#333" stroke-width="0.6"/><circle cx="96.5" cy="55.900000000000006" r="0.9" fill="#2f6fd0"/>
<path d="M104.9,52.2h4.2l-2.1,2.3z" fill="#222"/>
<line x1="114" y1="45.5" x2="114" y2="60.5" stroke="#8c8c8c" stroke-width="0.9"/>
<g fill="none" stroke="#333" stroke-width="0.8" stroke-linecap="round" stroke-linejoin="round"><circle cx="123.5" cy="50.0" r="1"/><path d="M123.5,51.2 v3.5 l-2,3.5 M123.5,54.7 l2,3.5 M121.5,53.2 l2,-1.2 l2,1.8"/></g>
<g fill="none" stroke="#2f5fb8" stroke-width="0.8" stroke-linecap="round" stroke-linejoin="round"><path d="M137.1,55.60000000000001 a2.4,2.4 0 0 1 0.3,-4.7 a3.2,3.2 0 0 1 6,-0.6 a2.6,2.6 0 0 1 0.2,5.3 z"/></g>
<ellipse cx="139.5" cy="53.2" rx="2" ry="1.3" fill="none" stroke="#333" stroke-width="0.6"/>
<line x1="150.3" y1="45.5" x2="150.3" y2="60.5" stroke="#8c8c8c" stroke-width="0.9"/>
<g fill="none" stroke="#333" stroke-width="1.0" stroke-linecap="round" stroke-linejoin="round"><circle cx="159.5" cy="52.7" r="4.0"/><path d="M154,52.7h11M159.5,47.2v11"/></g>
<g fill="none" stroke="#333" stroke-width="0.9" stroke-linecap="round" stroke-linejoin="round"><path d="M171.5,50.7v-2.5h2.5M178,48.2h2.5v2.5M180.5,54.7v2.5h-2.5M174,57.2h-2.5v-2.5"/><path d="M174,55.2 v-3.5 l2.0,-2.5 l2.0,2.5 v3.5 z"/></g>
<g fill="none" stroke="#333" stroke-width="0.8" stroke-linecap="round" stroke-linejoin="round"><circle cx="193.5" cy="50.0" r="1"/><path d="M193.5,51.2 v3.5 l-2,3.5 M193.5,54.7 l2,3.5 M191.5,53.2 l2,-1.2 l2,1.8"/></g>
<rect x="190" y="48.2" width="7" height="4.5" fill="none" stroke="#333" stroke-width="0.6"/>
<g fill="none" stroke="#5a6ea8" stroke-width="0.8" stroke-linecap="round" stroke-linejoin="round"><path d="M207.5,55.7 a2.4,2.4 0 0 1 0.3,-4.7 a3.2,3.2 0 0 1 6,-0.6 a2.6,2.6 0 0 1 0.2,5.3 z"/></g>
<path d="M206,49.2h8" stroke="#444" stroke-width="0.6" stroke-dasharray="1 1"/>
<path d="M220,52.7 l4.5,-3 v6 z M230,52.7 l-4.5,-3 v6 z" fill="none" stroke="#b0b0b0" stroke-width="0.7"/>
<line x1="236.3" y1="45.5" x2="236.3" y2="60.5" stroke="#8c8c8c" stroke-width="0.9"/>
<g fill="none" stroke="#445" stroke-width="0.8" stroke-linecap="round" stroke-linejoin="round"><rect x="244.5" y="48.2" width="7" height="7"/><rect x="247" y="50.7" width="6.5" height="6.5" fill="#2f6fd0" fill-opacity="0.35"/></g>
<path d="M261.9,52.2h4.2l-2.1,2.3z" fill="#222"/>
<line x1="271" y1="45.5" x2="271" y2="60.5" stroke="#8c8c8c" stroke-width="0.9"/>
<rect x="276.5" y="47.7" width="10.5" height="10" fill="none" stroke="#333" stroke-width="0.8" stroke-dasharray="1.6 1.1"/>
<g fill="none" stroke="#555" stroke-width="0.6" stroke-linecap="round" stroke-linejoin="round"><path d="M279.5,53.0 l3,-2.5 h2.5 v2.5 l-3,2.5 h-2.5 z M279.5,53.0 h2.5 v2.5 M282,53.0 l3,-2.5"/></g>
<path d="M295.5,52.2h4.2l-2.1,2.3z" fill="#222"/>
<g fill="none" stroke="#c8c8c8" stroke-width="0.8" stroke-linecap="round" stroke-linejoin="round"><path d="M306.5,56.05 a2.4,2.4 0 0 1 0.3,-4.7 a3.2,3.2 0 0 1 6,-0.6 a2.6,2.6 0 0 1 0.2,5.3 z"/></g>
<g fill="none" stroke="#b4bcd8" stroke-width="0.8" stroke-linecap="round" stroke-linejoin="round"><path d="M325.3,55.7 a2.4,2.4 0 0 1 0.3,-4.7 a3.2,3.2 0 0 1 6,-0.6 a2.6,2.6 0 0 1 0.2,5.3 z"/></g>
<path d="M341.29999999999995,52.2h4.2l-2.1,2.3z" fill="#555"/>
<line x1="349.7" y1="45.5" x2="349.7" y2="60.5" stroke="#8c8c8c" stroke-width="0.9"/>
<g fill="none" stroke="#c0c0c0" stroke-width="0.8" stroke-linecap="round" stroke-linejoin="round"><path d="M358.5,48.7h2.5v4h-2.5z M356,53.2h7v3h-7z M355.5,56.7h8"/></g>
<g fill="none" stroke="#c0c0c0" stroke-width="0.8" stroke-linecap="round" stroke-linejoin="round"><path d="M374.3,47.89999999999999h2.5v4h-2.5z M371,53.2h8.600000000000023v3h-8.600000000000023z M370.5,57.500000000000014h9.600000000000023"/></g>
<line x1="386.4" y1="45.5" x2="386.4" y2="60.5" stroke="#8c8c8c" stroke-width="0.9"/>
<g fill="none" stroke="#c0c0c0" stroke-width="0.8" stroke-linecap="round" stroke-linejoin="round"><rect x="393.5" y="49.7" width="10" height="7" rx="1"/><circle cx="398.5" cy="53.2" r="2"/><path d="M397.0,49.7l0.7,-1.3h1.8l0.7,1.3"/></g>
<path d="M411.7,52.2h4.2l-2.1,2.3z" fill="#555"/>
<g fill="none" stroke="#c4cce0" stroke-width="0.8" stroke-linecap="round" stroke-linejoin="round"><path d="M422.5,56.2 a2.4,2.4 0 0 1 0.3,-4.7 a3.2,3.2 0 0 1 6,-0.6 a2.6,2.6 0 0 1 0.2,5.3 z"/></g>
<g fill="none" stroke="#c8c8d4" stroke-width="0.8" stroke-linecap="round" stroke-linejoin="round"><path d="M437.5,50.7v-2.5h2.5M444,48.2h2.5v2.5M446.5,54.7v2.5h-2.5M440,57.2h-2.5v-2.5"/><path d="M440,55.2 v-3.5 l2.0,-2.5 l2.0,2.5 v3.5 z"/></g>
<line x1="452.8" y1="45.5" x2="452.8" y2="60.5" stroke="#8c8c8c" stroke-width="0.9"/>
<g fill="none" stroke="#cccccc" stroke-width="0.8" stroke-linecap="round" stroke-linejoin="round"><rect x="457.5" y="49.39999999999999" width="10.600000000000023" height="7.600000000000023" rx="1"/><circle cx="462.8" cy="53.2" r="2"/><path d="M461.3,49.39999999999999l0.7,-1.3h1.8l0.7,1.3"/></g>
<path d="M473.6,53.7 L476.6,50.2 L485,51.7 L482,55.2 Z" fill="#bbbbbb" fill-opacity="0.35" stroke="#bbbbbb" stroke-width="0.5"/>
<line x1="506" y1="48" x2="506" y2="58" stroke="#888" stroke-width="0.9"/>
<g fill="none" stroke="#333" stroke-width="0.8" stroke-linecap="round" stroke-linejoin="round"><rect x="512.8" y="50.40000000000002" width="4.599999999999966" height="4.599999999999966"/><path d="M511.3,48.90000000000002l1.5,1.5M518.9,48.90000000000002l-1.5,1.5M511.3,56.499999999999986l1.5,-1.5M518.9,56.499999999999986l-1.5,-1.5"/></g>
<g fill="none" stroke="#888" stroke-width="0.7" stroke-dasharray="1.6 1"><path d="M529.4,48.14999999999999v9.100000000000023M533.5,48.14999999999999v9.100000000000023M526.9,50.64999999999999h9.100000000000023M526.9,54.750000000000014h9.100000000000023"/></g>
<path d="M541.6999999999999,52.2h4.2l-2.1,2.3z" fill="#555"/>
<g fill="none" stroke="#c0c0c0" stroke-width="0.8" stroke-linecap="round" stroke-linejoin="round"><path d="M559.5,48.7 L551,56.7 L559,54.7 M554,51.2 l3.5,4"/></g>
<line x1="577.5" y1="44" x2="577.5" y2="61.5" stroke="#a6cbea" stroke-width="0.6"/>
<g fill="none" stroke="#2f6fd0" stroke-width="0.8"><path d="M566,49.45 h4 v3 h-4z" fill="#2f6fd0" fill-opacity="0.5"/><path d="M569,50.95 l4.5,4.0" stroke="#224" stroke-width="1.3"/><path d="M566,56.45h7.5" stroke-width="1.4"/><path d="M567,53.2h4v2.4h-4z" /></g>
<path d="M582.5,47.7 l4,2.2 v7.8 l-4,-2.2 z" fill="#556" fill-opacity="0.55" stroke="#556" stroke-width="0.6"/><path d="M583.9,49.7v7" stroke="#fff" stroke-width="0.4"/>
<path d="M585,53.7l3,2.5l-1.8,0.3z" fill="#222"/>
<g fill="none" stroke="#c0c0c0" stroke-width="0.8" stroke-linecap="round" stroke-linejoin="round"><rect x="597.6" y="52.2" width="5.7999999999999545" height="3.8999999999999773"/><path d="M598.9,52.2 v-2 a1.5999999999999774,1.5999999999999774 0 0 1 3.199999999999955,0 v2"/></g>
<path d="M610.9,52.2h4.2l-2.1,2.3z" fill="#555"/>
<line x1="619.7" y1="45.5" x2="619.7" y2="60.5" stroke="#8c8c8c" stroke-width="0.9"/>
<g fill="none" stroke="#2a3a88" stroke-width="0.8" stroke-linecap="round" stroke-linejoin="round"><path d="M626,48.2 L634.5,57.2 H626 Z"/><path d="M628,52.900000000000006 L630.6,55.300000000000004 H628 Z" stroke-width="0.6"/></g>
<line x1="640" y1="56.7" x2="648" y2="48.7" stroke="#e88a3a" stroke-width="1.1"/><circle cx="640" cy="56.7" r="0.9" fill="#333"/><circle cx="648" cy="48.7" r="0.9" fill="#333"/>
<path d="M652,52.7h8M656,48.7v8" stroke="#ecd8c4" stroke-width="0.7"/><path d="M658,54.7l3,3m0,-3l-3,3" stroke="#c8c8c8" stroke-width="0.6"/>
<path d="M666.5,54.7 L670.0,49.7 L673.5,52.7 L671.0,56.2 Z" fill="#c0c0c0" fill-opacity="0.4" stroke="#c0c0c0" stroke-width="0.6"/>
<line x1="680" y1="45.5" x2="680" y2="60.5" stroke="#8c8c8c" stroke-width="0.9"/>
<g fill="none" stroke="#333" stroke-width="0.8" stroke-linecap="round" stroke-linejoin="round"><path d="M685.5,48.89999999999999 l7.100000000000023,7.600000000000023 M687.5,48.39999999999999 l6.600000000000023,7.100000000000023" stroke-width="1"/></g>
<g fill="none" stroke="#333" stroke-width="0.8" stroke-linecap="round" stroke-linejoin="round"><path d="M700.6,51.7 l3.5,4 l4.899999999999977,-6.899999999999977" /></g>
<g fill="none" stroke="#333" stroke-width="0.8" stroke-linecap="round" stroke-linejoin="round"><path d="M725.5,48.050000000000026 L715.7,57.34999999999998 L725,55.34999999999998 M718.7,51.2 l3.5,4"/></g>
<path d="M716,56.7l8,-2.2" stroke="#333" stroke-width="0.6"/>
<path d="M731.5,52.2h4.2l-2.1,2.3z" fill="#222"/>
<line x1="739.8" y1="45.5" x2="739.8" y2="60.5" stroke="#8c8c8c" stroke-width="0.9"/>
<line x1="761" y1="44" x2="761" y2="61.5" stroke="#a6cbea" stroke-width="0.6"/>
<g fill="none" stroke-width="0.7"><path d="M747.9,53.900000000000006h10.399999999999977" stroke="#2f6fd0"/><path d="M747.9,56.5h10.399999999999977" stroke="#2f6fd0" stroke-dasharray="1.4 1"/><path d="M752.0999999999999,53.5 l4.5,-5.5" stroke="#333"/><path d="M750.5999999999999,49.2 l3,3.5" stroke="#333"/></g>
<path d="M763.4,52.2h4.2l-2.1,2.3z" fill="#222"/>
<line x1="771.8" y1="45.5" x2="771.8" y2="60.5" stroke="#8c8c8c" stroke-width="0.9"/>
<path d="M782,48.2 l4.5,7 l-8,2.5" fill="none" stroke="#444" stroke-width="0.8"/><circle cx="786.5" cy="55.2" r="0.9" fill="#2f6fd0"/>
<path d="M794.3,52.2h4.2l-2.1,2.3z" fill="#444"/>
<line x1="803" y1="45.5" x2="803" y2="60.5" stroke="#8c8c8c" stroke-width="0.9"/>
<path d="M809.5,55.95 L814.25,48.45 L819.0,52.7 L815.25,57.45 Z" fill="#4a6ab8" fill-opacity="0.4" stroke="#4a6ab8" stroke-width="0.6"/>
<path d="M811,51.7l5,-1.5M812,53.900000000000006l5,-1.5" stroke="#fff" stroke-width="0.5"/>
<path d="M825.9,52.2h4.2l-2.1,2.3z" fill="#222"/>
<line x1="834.7" y1="45.5" x2="834.7" y2="60.5" stroke="#8c8c8c" stroke-width="0.9"/>
<path d="M840.5,53.7 L843.5,50.2 L849.7,51.7 L846.7,55.2 Z" fill="#c0b8d8" fill-opacity="0.35" stroke="#c0b8d8" stroke-width="0.5"/>
<path d="M856.25,47.7 l4,2.2 v7.8 l-4,-2.2 z" fill="#4a78d8" fill-opacity="0.55" stroke="#4a78d8" stroke-width="0.6"/><path d="M857.65,49.7v7" stroke="#fff" stroke-width="0.4"/>
<path d="M867.75,47.2 l4,2.2 v7.8 l-4,-2.2 z" fill="#5a80d0" fill-opacity="0.55" stroke="#5a80d0" stroke-width="0.6"/><path d="M869.15,49.2v7" stroke="#fff" stroke-width="0.4"/>
<rect x="871" y="53.5" width="6.3" height="3.6" fill="#dfe8f8" stroke="#2f5fb8" stroke-width="0.5"/>
<g fill="none" stroke="#333" stroke-width="0.6"><path d="M9,88.5l5,-3m-3,-1.2v5.5M14.5,84v4.5" /><path d="M8.5,86h8" stroke-dasharray="1 0.8"/><rect x="33" y="84" width="8.5" height="5.5" stroke-dasharray="1.3 0.9"/><path d="M42,84.5l2.5,2.5l-2,0.4z" fill="#222"/></g>
<path d="M23,85v4l2.2,-2z" fill="#222"/>
<path d="M47,85v4l2.2,-2z" fill="#222"/>
<g fill="none" stroke="#224" stroke-width="0.7"><ellipse cx="64.5" cy="87.5" rx="4.2" ry="2.6"/><path d="M62.5,87.5v-3.2l2,-0.8l2.2,1.2v2.6" fill="#9fbce8" stroke="#223"/><path d="M63.2,86.3l2.5,2" /></g>
<g fill="none" stroke="#333" stroke-width="0.7"><path d="M83,80.5h6.5l1.2,-0.8v6.5l-1.2,0.8h-6.5z"/><path d="M83,87l7.7,-0.8" /><path d="M86,80.5v6.3" stroke-width="0.5"/></g>
<path d="M97.2,83.5h4.2l-2.1,2.3z" fill="#222"/>
<g stroke="#a8a8a8" stroke-width="0.6" fill="none"><path d="M116.6,88.5l10,-9" stroke-dasharray="1.2 0.9"/><path d="M118.1,81.5l3,2.5M122.6,85.5l3,2.5"/><path d="M119.1,80.5l3,2.5M121.8,86.5l3,2.5"/></g>
<g stroke="#c4c4c4" stroke-width="0.6" fill="none"><path d="M142,88.5l10,-9" stroke-dasharray="1.2 0.9"/><path d="M143.5,81.5l3,2.5M148,85.5l3,2.5"/><path d="M144.5,80.5l3,2.5M147.2,86.5l3,2.5"/></g>
<g stroke="#c4c4c4" stroke-width="0.6" fill="none"><path d="M166,88.5l10,-9" stroke-dasharray="1.2 0.9"/><path d="M167.5,81.5l3,2.5M172,85.5l3,2.5"/><path d="M168.5,80.5l3,2.5M171.2,86.5l3,2.5"/></g>
<g stroke="#c4c4c4" stroke-width="0.6" fill="none"><path d="M191,88.5l10,-9" stroke-dasharray="1.2 0.9"/><path d="M192.5,81.5l3,2.5M197,85.5l3,2.5"/><path d="M193.5,80.5l3,2.5M196.2,86.5l3,2.5"/></g>
<rect x="220" y="80.5" width="10" height="7" fill="none" stroke="#223" stroke-width="0.8"/><circle cx="249.6" cy="84.3" r="4.2" fill="none" stroke="#333" stroke-width="0.7"/>
<g fill="none" stroke="#333" stroke-width="0.7"><rect x="321" y="79.5" width="11.5" height="13"/><rect x="323.3" y="82.5" width="6.8" height="7.5" stroke-width="1.1"/><path d="M323,75.8v2.3M330.5,75.8v2.3M323,77h7.5" stroke-width="0.5"/><path d="M335.5,83v8M334.3,84.5l1.2,-1.5l1.2,1.5M334.3,89.5l1.2,1.5l1.2,-1.5" stroke-width="0.5"/><path d="M338,87.5v3h1.5" stroke-width="0.5"/></g>
<g fill="none" stroke="#223" stroke-width="0.9"><rect x="409.6" y="76.5" width="3.6" height="5" rx="1.6"/><rect x="409.6" y="86.5" width="3.6" height="5" rx="1.6"/><path d="M411.4,80v8"/></g>
<g fill="none" stroke="#333" stroke-width="0.7"><rect x="425" y="77.5" width="13.5" height="15"/><path d="M428,80.5v7.5h7.5v-7.5" stroke-width="1"/><path d="M426.5,90.5h10.5" stroke-width="0.6"/></g><path d="M440.3,78.5h2.6l-1.3,-1.6z M440.3,90h2.6l-1.3,1.6z" fill="#222"/>
<g fill="#222"><rect x="606.65" y="76.65" width="1.7" height="1.7"/><rect x="606.65" y="83.65" width="1.7" height="1.7"/><rect x="606.65" y="90.65" width="1.7" height="1.7"/><rect x="613.65" y="76.65" width="1.7" height="1.7"/><rect x="613.65" y="83.65" width="1.7" height="1.7"/><rect x="613.65" y="90.65" width="1.7" height="1.7"/><rect x="620.65" y="76.65" width="1.7" height="1.7"/><rect x="620.65" y="83.65" width="1.7" height="1.7"/><rect x="620.65" y="90.65" width="1.7" height="1.7"/></g>
<rect x="610.5" y="74.5" width="8" height="6" fill="#cce4f7"/><path d="M611,77.5h7M613,76l-2,1.5l2,1.5M616,76l2,1.5l-2,1.5" fill="none" stroke="#224" stroke-width="0.5"/><g stroke="#222" stroke-width="0.5"><path d="M607.5,80v2M607.5,87v2M621.5,80v2M621.5,87v2M610,91.5h2M617,91.5h2"/></g>
<rect x="634" y="80" width="8.6" height="8.6" fill="#fff" stroke="#333" stroke-width="0.7"/><rect x="636" y="82" width="4.6" height="4.6" fill="#bbb" stroke="#222" stroke-width="1"/>
<path d="M723.5,82.6v4l2.2,-2z" fill="#222"/>
<g fill="none" stroke="#333" stroke-width="0.7"><path d="M743,81h6.5l2,1.5v3.5l-2,1.5h-6.5l-2,-1.5v-3.5z" fill="none"/><path d="M744.4,79v2M747.6,79v2M744.4,88v2M747.6,88v2" stroke-width="0.6"/></g>
<g fill="none" stroke="#223" stroke-width="0.7"><path d="M766,79v11M768,79v11"/><path d="M768,81.5h6l1.6,1.3v3.4l-1.6,1.3h-6" fill="#e8f0fa"/><path d="M764,84.5h2" stroke-dasharray="0.8 0.6"/></g>
<g fill="none" stroke="#333" stroke-width="0.7"><path d="M792.5,79v11M794.5,79v11"/><path d="M794.5,81.5h3.8l1.6,1.3v3.4l-1.6,1.3h-3.8"/></g>
<g fill="none" stroke="#444" stroke-width="0.7"><path d="M814.5,88.5v-5l4.5,-3.2l4.5,3.2"/><path d="M819,88.5v-5.2h2.6a2,2 0 0 1 0,2.6a2,2 0 0 1 -0.4,2.6z"/><path d="M813,85.5l-1.4,1.6l1.6,1.4" stroke-dasharray="1 0.8"/></g>
<g fill="none" stroke="#222" stroke-width="0.8"><path d="M842.3,75.5v7M842.3,79h6"/><rect x="848.3" y="76.8" width="8.5" height="4.5" rx="1"/></g><g fill="none" stroke="#c4c4c4" stroke-width="0.7"><path d="M848.3,86.5v7M848.3,90h3.5"/><path d="M851.8,87v5h5.2v-5M851.8,92v2.4M857,92v2.4"/></g>
<g fill="none" stroke="#333" stroke-width="0.6"><circle cx="946.5" cy="84.5" r="2.4"/><circle cx="948.6" cy="86.3" r="2.4"/><path d="M943.8,81.8l6.8,6.8"/></g>
<g fill="none" stroke="#444" stroke-width="0.7"><path d="M1024.5,87.2a2.2,2.2 0 0 1 0.2,-4.3a3,3 0 0 1 5.6,-0.5a2.4,2.4 0 0 1 0.2,4.8z"/><path d="M1027.6,82.5v6.3M1026,85.5h3.2"/></g>
<path d="M1034.6,82.5v4l2.2,-2z" fill="#222"/>
<g fill="none" stroke="#333" stroke-width="0.7"><rect x="23" y="99.5" width="3.6" height="2.8"/><rect x="28" y="99.5" width="3.6" height="2.8"/><rect x="23" y="104" width="3.6" height="2.8"/><rect x="28" y="104" width="3.6" height="2.8"/></g>
<path d="M37.5,107v-8h4v2.5h5.5v5.5z" fill="#fff" stroke="#222" stroke-width="0.8"/>
<g fill="none" stroke="#444" stroke-width="0.6"><path d="M208,108l1,-6h2.5l1,6zM207,108h6.5M208.7,102v-1.5l1.5,-1l1.5,1v1.5M208.4,104.5h3.3"/></g><circle cx="213.6" cy="99" r="1.1" fill="#e03020"/>
<path d="M376,99.3l6,-0.6l1.6,1v6.4l-1.6,1.4l-6,-0.7z M382,98.7v8.8" fill="none" stroke="#222" stroke-width="0.7"/>
<path d="M533.3,102l2.6,2.6m0,-2.6l-2.6,2.6" stroke="#111" stroke-width="0.9"/>
<path d="M544,107.3v-4.5l3,-2.5h3.5l3,2.5v4.5z" fill="#fff" stroke="#222" stroke-width="0.8"/>
<g fill="none" stroke="#2f7fd8" stroke-width="0.8"><path d="M952,100v7M952,102.5h3M952,106h3"/><path d="M956.5,107.3v-4l3,-2.6h3l3.5,3v3.6z"/><path d="M962.5,100.7v6.6" stroke-width="0.5"/></g>
<path d="M970.3,101.5h4.2l-2.1,2.3z" fill="#333"/>
<path d="M8.3,105.2v8.6l2.1,-2l1.5,3.1l1.3,-0.6l-1.5,-3l2.9,-0.2z" fill="#7a8496" stroke="#3a4254" stroke-width="0.7"/>
<rect x="4.5" y="122.2" width="11" height="8.6" fill="none" stroke="#333" stroke-width="0.8" stroke-dasharray="1.6 1.1"/>
<g fill="none" stroke="#333" stroke-width="0.7" stroke-linejoin="round" transform="translate(0.4,0)"><path d="M4.5,156l10.5,-1.8v7l-10.5,2.2z"/></g>
<g fill="none" stroke="#333" stroke-width="0.7" stroke-linejoin="round" transform="translate(0.4,0)"><path d="M7,171.5l5.5,-1.5v9.5l-5.5,1.5z"/><path d="M8.5,176v1.2" /></g>
<g fill="none" stroke="#333" stroke-width="0.7" stroke-linejoin="round" transform="translate(0.4,0)"><path d="M5,188.5l10,-0.8v7.6l-10,0.8zM10,188v8M5,192.2l10,-0.6"/></g>
<g fill="none" stroke="#333" stroke-width="0.7" stroke-linejoin="round" transform="translate(0.4,0)"><path d="M5.5,205.5h8v6.5h-8zM13.5,205.5l1.8,-1v6.5l-1.8,1M5.5,212l1.8,1.6h8"/></g>
<g fill="none" stroke="#333" stroke-width="0.7" stroke-linejoin="round" transform="translate(0.4,0)"><path d="M8,221.5a2,0.9 0 0 1 4,0v9a2,0.9 0 0 1 -4,0z"/></g>
<g fill="none" stroke="#333" stroke-width="0.7" stroke-linejoin="round" transform="translate(0.4,0)"><path d="M4,239.5l12,4.5v2.5l-12,-4.5z"/></g>
<g fill="none" stroke="#333" stroke-width="0.7" stroke-linejoin="round" transform="translate(0.4,0)"><path d="M3.5,259.5l6,-3.5l7,2.2l-6,3.8zM3.5,259.5v1.2l7,2.6l6,-3.8v-1.3"/></g>
<g fill="none" stroke="#333" stroke-width="0.7" stroke-linejoin="round" transform="translate(0.4,0)"><path d="M4,272.5l4,-1.2l3,1.5l-3.5,1.3zM6.5,275.2l4,-1.2l3,1.5l-3.5,1.3zM9,278l4,-1.2l3,1.5l-3.5,1.3zM7.5,274.2v1.3M10,277v1.3"/></g>
<g fill="none" stroke="#333" stroke-width="0.7" stroke-linejoin="round" transform="translate(0.4,0)"><path d="M4,296.5v-5.5l11,-2.6v5.5M4,291l11,-2.6M8,295.5v-5.4M11.5,294.6v-5.4"/></g>
<g fill="none" stroke="#333" stroke-width="0.7" stroke-linejoin="round" transform="translate(0.4,0)"><path d="M3.5,311.5l5,-6l6,1.2l2.5,5l-7.5,2.5z M8.5,305.5l2,8.5"/></g>
<g fill="none" stroke="#333" stroke-width="0.7" stroke-linejoin="round" transform="translate(0.4,0)"><path d="M3.5,322l6.5,4.5l6.5,-5.5l-2.5,10.5l-4,-5l-3.5,4.5z"/></g>
<g fill="none" stroke="#333" stroke-width="0.7" stroke-linejoin="round" transform="translate(0.4,0)"><path d="M4,341.5l6,-2.5l6.5,3l-6,3zM4,341.5v1.6l6.5,3.4l6,-3v-1.5 M7,340.3l6.5,3.2"/></g>
<g fill="none" stroke="#333" stroke-width="0.7" stroke-linejoin="round" transform="translate(0.4,0)"><path d="M4.5,357v10l11.5,-1v-10zM8.3,356.7v10M12.2,356.3v10M4.5,360.3l11.5,-0.8M4.5,363.7l11.5,-0.8"/></g>
<g fill="none" stroke="#333" stroke-width="0.7" stroke-linejoin="round" transform="translate(0.4,0)"><path d="M8,384l-2,-6l4,-6.5l4,3l-1.5,8z M10,371.5l1,9.5"/></g>
<g fill="none" stroke="#333" stroke-width="0.7" stroke-linejoin="round" transform="translate(0.4,0)"><path d="M7,389.5v7.5l4.5,0.5l2,3.5M7,393.5l4,-1l3,3M7,397v4.5M11.5,397.5v4"/></g>
<g fill="none" stroke="#333" stroke-width="0.7" stroke-linejoin="round" transform="translate(0.4,0)"><path d="M5,406h8v3.5h3.5v8h-11.5zM7.5,409h3.5v3h2.5v3"/></g>
<g fill="none" stroke="#333" stroke-width="0.7" stroke-linejoin="round" transform="translate(0.4,0)"><path d="M3,427.5l9,-3.5l6,5l-9,3.5zM6,426.4l6,5M9,425.2l6,5M5,429l9,-3.4M7,430.7l9,-3.4"/></g>
<g fill="none" stroke="#9a9a9a" stroke-width="0.7"><path d="M4,497h12M4,494.5v5M16,494.5v5M5.5,495.8l-1.5,1.2l1.5,1.2M14.5,495.8l1.5,1.2l-1.5,1.2"/></g>
<g fill="none" stroke="#9a9a9a" stroke-width="0.7"><circle cx="9.5" cy="513" r="3.6"/><path d="M4,513h11M9.5,507.5v11"/></g>
<g fill="none" stroke="#9a9a9a" stroke-width="0.7"><path d="M4,550.5l5.5,-5M4,550.5v-3.2M4,550.5h3.2"/></g>
<path d="M4,567.5l4.5,-7h8v7z" fill="#a8a8a8" stroke="#888" stroke-width="0.6"/><path d="M6,567l4,-6M9,567l4,-6M12,567l4,-6" stroke="#777" stroke-width="0.5"/>
<g fill="none" stroke="#9a9a9a" stroke-width="0.7"><path d="M5,583l9,-9"/></g>
<path d="M999,114.5h5M1001.5,108.5v5M1000,112l1.5,1.6l1.5,-1.6" fill="none" stroke="#eee" stroke-width="0.6"/>
<g fill="none" stroke="#c2c6cc" stroke-width="0.7"><rect x="981" y="124.5" width="6" height="6"/><rect x="984" y="127.5" width="6" height="5" fill="#e8ecf2"/></g>
<g fill="none" stroke="#c2c6cc" stroke-width="0.7"><rect x="1015" y="124.5" width="6" height="6"/><rect x="1018" y="127.5" width="6" height="5" fill="#e8ecf2"/></g>
<g fill="none" stroke="#c2c6cc" stroke-width="0.7"><rect x="1032" y="124.5" width="6" height="6"/><rect x="1035" y="127.5" width="6" height="5" fill="#e8ecf2"/></g>
<g fill="none" stroke="#c2c6cc" stroke-width="0.7"><rect x="1048.7" y="124.5" width="6" height="6"/><rect x="1051.7" y="127.5" width="6" height="5" fill="#e8ecf2"/></g>
<g fill="none" stroke="#c2c6cc" stroke-width="0.7"><rect x="1066" y="124.5" width="6" height="6"/><rect x="1069" y="127.5" width="6" height="5" fill="#e8ecf2"/></g>
<rect x="998.5" y="156.5" width="6.5" height="7" fill="#e8e8c8" opacity="0.8"/>
<path d="M1007.3,158.3v4l2.2,-2z" fill="#888"/>
<path d="M1054.3,154.0h3.4v5l-1.7,1.6l-1.7,-1.6z" fill="#b8b8b8"/>
<g stroke="#cfcfcf" stroke-width="0.5"><line x1="1018.0" y1="162.5" x2="1018.0" y2="164.1"/><line x1="1022.2" y1="162.5" x2="1022.2" y2="164.1"/><line x1="1026.4" y1="162.5" x2="1026.4" y2="164.1"/><line x1="1030.6" y1="162.5" x2="1030.6" y2="164.1"/><line x1="1034.8" y1="162.5" x2="1034.8" y2="164.1"/><line x1="1039.0" y1="162.5" x2="1039.0" y2="164.1"/><line x1="1043.2" y1="162.5" x2="1043.2" y2="164.1"/><line x1="1047.4" y1="162.5" x2="1047.4" y2="164.1"/><line x1="1051.6" y1="162.5" x2="1051.6" y2="164.1"/><line x1="1055.8" y1="162.5" x2="1055.8" y2="164.1"/></g>
<circle cx="1001.5" cy="187" r="3" fill="#d88"/><path d="M1001.5,187v-3a3,3 0 0 1 2.6,4.5z" fill="#6a9ad8"/><path d="M1001.5,187l2.6,1.5a3,3 0 0 1 -4.5,0.8z" fill="#8c8"/>
<path d="M1007.3,185v4l2.2,-2z" fill="#888"/>
<path d="M1054.3,180.8h3.4v5l-1.7,1.6l-1.7,-1.6z" fill="#b8b8b8"/>
<g stroke="#cfcfcf" stroke-width="0.5"><line x1="1018.0" y1="189.3" x2="1018.0" y2="190.9"/><line x1="1022.2" y1="189.3" x2="1022.2" y2="190.9"/><line x1="1026.4" y1="189.3" x2="1026.4" y2="190.9"/><line x1="1030.6" y1="189.3" x2="1030.6" y2="190.9"/><line x1="1034.8" y1="189.3" x2="1034.8" y2="190.9"/><line x1="1039.0" y1="189.3" x2="1039.0" y2="190.9"/><line x1="1043.2" y1="189.3" x2="1043.2" y2="190.9"/><line x1="1047.4" y1="189.3" x2="1047.4" y2="190.9"/><line x1="1051.6" y1="189.3" x2="1051.6" y2="190.9"/><line x1="1055.8" y1="189.3" x2="1055.8" y2="190.9"/></g>
<g fill="none" stroke="#c2c6cc" stroke-width="0.7"><rect x="998" y="203.5" width="6" height="6.5"/><rect x="1001.5" y="206.5" width="5.5" height="5.5" fill="#e4e8ee"/></g>
<g fill="none" stroke="#c2c6cc" stroke-width="0.7"><rect x="1015" y="203.5" width="6" height="6.5"/><rect x="1018.5" y="206.5" width="5.5" height="5.5" fill="#e4e8ee"/></g>
<g fill="none" stroke="#c2c6cc" stroke-width="0.7"><rect x="1032" y="203.5" width="6" height="6.5"/><rect x="1035.5" y="206.5" width="5.5" height="5.5" fill="#e4e8ee"/></g>
<g fill="none" stroke="#c2c6cc" stroke-width="0.7"><rect x="1049" y="203.5" width="6" height="6.5"/><rect x="1052.5" y="206.5" width="5.5" height="5.5" fill="#e4e8ee"/></g>
<g fill="none" stroke="#222" stroke-width="0.7"><path d="M985,230v7h3.2M985,233h3.2"/><rect x="988.2" y="231.8" width="2.6" height="2.2"/><rect x="988.2" y="235.8" width="2.6" height="2.2"/><path d="M983.5,230h3.5v-1.6h-3.5z"/></g>
<path d="M996.6,231.5v4l2.2,-2z" fill="#222"/>
<g fill="none" stroke="#222" stroke-width="0.8"><path d="M1016,238.2v-4.5l3,-3l3,1.5l2.5,3v3zM1022,232.2v6"/><path d="M1034,238.2v-8h3.5v2.5h5v5.5z"/><path d="M1051,238.5v-6.5l2.5,-2.5v2h5v6.5z M1053.5,231.5v7"/><path d="M1067.5,230.5h6.5M1067.5,230.5v6l2,1.5h4.5M1069.5,230.5v7.5"/></g>
<path d="M1071,247.5l1,-1.2l1,1.2z M1071,515l1,1.2l1,-1.2z" fill="#666"/>
<path d="M980.2,248.3l2.4,2.5l2.4,-2.5" fill="none" stroke="#333" stroke-width="1.1"/>
<g fill="none" stroke="#222" stroke-width="0.7" stroke-linejoin="round"><path d="M988.5,253.1v-3.6l3,-3l2.6,1.3l2.8,2.6v2.7zM994.1,247.8v5.3"/></g>
<path d="M985.3000000000001,260.6l2.4,2.5l2.4,-2.5" fill="none" stroke="#333" stroke-width="1.1"/>
<g fill="none" stroke="#222" stroke-width="0.7" stroke-linejoin="round"><path d="M993.8,265.40000000000003v-7.4h3.6v2.4h5.4v5z"/></g>
<g fill="none" stroke="#222" stroke-width="0.7" stroke-linejoin="round"><path d="M999.8,277.70000000000005v-7.4h3.6v2.4h5.4v5z"/></g>
<g fill="none" stroke="#222" stroke-width="0.7" stroke-linejoin="round"><path d="M999.8,290.0v-7.4h3.6v2.4h5.4v5z"/></g>
<g fill="none" stroke="#222" stroke-width="0.7" stroke-linejoin="round"><path d="M999.8,302.3v-7.4h3.6v2.4h5.4v5z"/></g>
<g fill="none" stroke="#222" stroke-width="0.7" stroke-linejoin="round"><path d="M994.8,314.6v-4l2.5,-2.6h4l2.5,2.6v4zM994.8,311.2h9"/></g>
<path d="M985.3000000000001,322.2l2.4,2.5l2.4,-2.5" fill="none" stroke="#333" stroke-width="1.1"/>
<g fill="none" stroke="#222" stroke-width="0.7" stroke-linejoin="round"><path d="M994.8,327.0v-4l2.5,-2.6h4l2.5,2.6v4z"/></g>
<g fill="none" stroke="#222" stroke-width="0.7" stroke-linejoin="round"><path d="M1001.1999999999999,339.40000000000003v-4.6l4.2,-2.8l4.2,2.8v4.6z"/></g>
<g fill="none" stroke="#222" stroke-width="0.7" stroke-linejoin="round"><path d="M1001.1999999999999,351.8v-4.6l4.2,-2.8l4.2,2.8v4.6z"/></g>
<g fill="none" stroke="#222" stroke-width="0.7" stroke-linejoin="round"><path d="M1001.1999999999999,364.20000000000005v-4.6l4.2,-2.8l4.2,2.8v4.6z"/></g>
<g fill="none" stroke="#222" stroke-width="0.7" stroke-linejoin="round"><path d="M1001.1999999999999,376.6v-4.6l4.2,-2.8l4.2,2.8v4.6z"/></g>
<g fill="none" stroke="#222" stroke-width="0.7" stroke-linejoin="round"><rect x="994.8" y="381.59999999999997" width="9" height="7.6"/><path d="M996.5999999999999,389.2v-4.6h2v4.6M1000.4,383.0h2v2h-2z" stroke-width="0.6"/></g>
<g fill="none" stroke="#222" stroke-width="0.7" stroke-linejoin="round"><rect x="994.8" y="394.0" width="9" height="7.6"/><path d="M996.3,399.8l2.2,-3l2,1.8l2,-3" stroke-width="0.6"/></g>
<g fill="none" stroke="#222" stroke-width="0.7" stroke-linejoin="round"><circle cx="999.3" cy="410.2" r="4.2"/><path d="M997.8,406.2v8M997.8,409.7h5.6M1000.8,409.7v4" stroke-width="0.6"/></g>
<g fill="none" stroke="#222" stroke-width="0.7" stroke-linejoin="round"><rect x="994.8" y="418.9" width="9" height="7.6"/><path d="M996.5999999999999,424.9v-3l1.6,-1.4h3v3l-1.6,1.4zM996.5999999999999,421.9h3v3" stroke-width="0.5"/></g>
<path d="M985.6,434.0l2.4,2.5l2.4,-2.5" fill="none" stroke="#333" stroke-width="1.1"/>
<g fill="none" stroke="#222" stroke-width="0.7" stroke-linejoin="round"><path d="M994.8,432.0l6,-0.6l2.4,1v6l-2.4,1l-6,-0.6zM1000.8,431.4v8"/></g>
<g fill="none" stroke="#222" stroke-width="0.7" stroke-linejoin="round"><path d="M1000.3,444.5l6,-0.6l2.4,1v6l-2.4,1l-6,-0.6zM1006.3,443.9v8"/></g>
<g fill="none" stroke="#222" stroke-width="0.7" stroke-linejoin="round"><path d="M1000.3,463.70000000000005v-5.2l2.4,-2h5.6v5.2l-2.4,2zM1000.3,458.5h5.6v5.2M1005.9,458.5l2.4,-2"/></g>
<path d="M985.6,471.2l2.4,2.5l2.4,-2.5" fill="none" stroke="#333" stroke-width="1.1"/>
<g fill="none" stroke="#222" stroke-width="0.7" stroke-linejoin="round"><rect x="996.0" y="468.0" width="6.8" height="8.8"/><path d="M998.3,468.0v8.8M1000.5999999999999,468.0v8.8M996.0,470.9h6.8M996.0,473.79999999999995h6.8" stroke-width="0.6"/></g>
<path d="M991.6,483.6l2.4,2.5l2.4,-2.5" fill="none" stroke="#333" stroke-width="1.1"/>
<g fill="none" stroke="#222" stroke-width="0.7" stroke-linejoin="round"><rect x="1000.3" y="483.0" width="10" height="3.6"/><path d="M1002.3,483.0v3.6M1004.3,483.0v3.6M1006.3,483.0v3.6M1008.3,483.0v3.6" stroke-width="0.7"/></g>
<g fill="none" stroke="#222" stroke-width="0.7" stroke-linejoin="round"><rect x="1007.0" y="492.70000000000005" width="6.8" height="8.8"/><path d="M1009.3,492.70000000000005v8.8M1011.5999999999999,492.70000000000005v8.8M1007.0,495.6h6.8M1007.0,498.5h6.8" stroke-width="0.6"/></g>
<g fill="none" stroke="#222" stroke-width="0.7" stroke-linejoin="round"><rect x="1007.0" y="504.90000000000003" width="6.8" height="8.8"/><path d="M1009.3,504.90000000000003v8.8M1011.5999999999999,504.90000000000003v8.8M1007.0,507.8h6.8M1007.0,510.7h6.8" stroke-width="0.6"/></g>
<g fill="none" stroke="#222" stroke-width="0.7" stroke-linejoin="round"><rect x="1007.0" y="516.9" width="6.8" height="8.8"/><path d="M1009.3,516.9v8.8M1011.5999999999999,516.9v8.8M1007.0,519.8h6.8M1007.0,522.6999999999999h6.8" stroke-width="0.6"/></g>
<rect x="977" y="521" width="97" height="10.5" fill="#f0f0f0"/><rect x="986.3" y="522.3" width="57.7" height="7" fill="#cdcdcd"/>
<path d="M982.2,523.8l-1.9,1.9l1.9,1.9 M1064.6,523.8l1.9,1.9l-1.9,1.9" fill="none" stroke="#555" stroke-width="0.8"/>
<g fill="none" stroke-width="0.8"><rect x="1033.5" y="538.5" width="8" height="7" stroke="#333"/><rect x="1037.5" y="542" width="6" height="5" fill="#fff" stroke="#2f6fd0"/></g>
<g fill="none" stroke="#c0c8d8" stroke-width="0.8"><path d="M1049.5,546.5v-6l2.5,-2v1.6h7v6.4z" fill="#e8ecf4"/><path d="M1056.5,538.5v3M1055,540h3"/></g>
<path d="M1068,539.5l5.5,6m0,-6l-5.5,6" stroke="#f0a898" stroke-width="0.9"/>
<path d="M978.4,557.8h4.2l-2.1,2.3z" fill="#333"/>
<g fill="none" stroke="#222" stroke-width="0.7" stroke-linejoin="round"><path d="M979,568.7l3.8,-0.5l1.6,0.7v4.6l-1.6,0.8l-3.8,-0.5zM982.8,568.2v6.1" stroke-width="0.6"/></g>
<g fill="none" stroke="#333" stroke-width="0.8"><path d="M982,605v-6.5h8.5v6.5M984,605v-4.5h6.5"/></g>
<g fill="none" stroke="#333" stroke-width="0.7"><circle cx="28.5" cy="589.8" r="3.3"/><path d="M25.5,592.5l-2.5,2.8"/><path d="M23,587.3v2.5h2.5" stroke-width="0.6"/></g>
<g fill="none" stroke="#c4c4c4" stroke-width="0.7"><circle cx="40" cy="589.8" r="3.3"/><path d="M42.5,592.5l2.5,2.8"/></g>
<g fill="none" stroke="#333" stroke-width="0.7"><circle cx="52.5" cy="589.8" r="3.3"/><path d="M55,592.5l2.5,2.8M50.8,589.8h3.4M52.5,588.0999999999999v3.4"/></g>
<g fill="none" stroke="#333" stroke-width="0.7"><path d="M66,591.8a1.8,1.8 0 0 1 0.2,-3.4a2.4,2.4 0 0 1 4.5,-0.4a1.9,1.9 0 0 1 0.2,3.8z"/><ellipse cx="68.7" cy="590.3" rx="1.4" ry="0.9" stroke-width="0.5"/></g>
<g fill="none" stroke="#333" stroke-width="0.7"><circle cx="81.3" cy="587.3" r="0.8"/><path d="M81.3,588.3v3l-1.4,2.6M81.3,591.3l1.5,2.6M79.8,589.8l1.5,-0.9l1.5,1.4" stroke-width="0.6"/></g>
<g fill="none" stroke="#333" stroke-width="0.7"><circle cx="97" cy="590.0" r="3.6"/><circle cx="95.8" cy="589.0" r="0.8"/><circle cx="98.3" cy="589.0" r="0.8"/><circle cx="97" cy="591.3" r="0.8"/><path d="M99.8,592.6999999999999l2.5,2.6"/></g>
<path d="M172,588.3v4l2.2,-2z" fill="#333"/>
<g fill="none" stroke="#c0c0c0" stroke-width="0.7"><path d="M183,591.3l3.5,-3.2l3.5,3.2M184.5,590.5v2.6M186.5,593.3a2,2 0 0 0 3,-1.5"/></g>
<path d="M260,588.3v4l2.2,-2z" fill="#333"/>
<g fill="none" stroke="#333" stroke-width="0.7"><rect x="271.3" y="588.3" width="8.6" height="4"/><path d="M273.3,588.3v1.6M275.5,588.3v2.2M277.7,588.3v1.6" stroke-width="0.5"/></g>
<path d="M349.5,588.3v4l2.2,-2z" fill="#333"/>
<g fill="none" stroke="#333" stroke-width="0.7"><path d="M360,590.3l2,-2.6h6l-2,2.6zM360,590.3v1.4h6v-1.4M360,593.5h6l2,-2.6" stroke-width="0.6"/></g>
<path d="M438.7,588.3v4l2.2,-2z" fill="#333"/>
<g fill="none" stroke="#333" stroke-width="0.7"><rect x="449.3" y="587.6999999999999" width="8" height="5.6"/><path d="M449.3,589.6999999999999h8M452,589.6999999999999v3.6M454.7,589.6999999999999v3.6" stroke-width="0.5"/></g>
<path d="M527.3,588.3v4l2.2,-2z" fill="#333"/>
<g fill="none" stroke="#333" stroke-width="0.7"><path d="M539.6,587.3v3.6a1.9,1.9 0 0 0 3.8,0v-3.6M541.5,592.9v1.6"/></g>
<path d="M615.5,588.3v4l2.2,-2z" fill="#333"/>
<g fill="none" stroke="#333" stroke-width="0.7"><rect x="627" y="587.6999999999999" width="8" height="5.6" rx="0.8"/><rect x="629" y="589.5" width="4" height="2" stroke-width="0.5"/></g>
<path d="M704.8,588.3v4l2.2,-2z" fill="#333"/>
<g fill="none" stroke="#333" stroke-width="0.7"><path d="M716,587.8h3.4v5h-3.4M719.4,589.3h3.6v4.5h-3.6z" stroke-width="0.6"/><rect x="720.4" y="590.8" width="1.8" height="1.8" fill="#555" stroke="none"/></g>
<path d="M793.5,588.3v4l2.2,-2z" fill="#333"/>
<g fill="none" stroke="#333" stroke-width="0.7"><path d="M804.5,593.3l4,-6.5l1.5,3l-2,3.5zM808.5,586.8v6.5h4.5l-1.5,-3z" stroke-width="0.6"/></g>
<path d="M881.8,588.3v4l2.2,-2z" fill="#333"/>
<g fill="none" stroke="#333" stroke-width="0.7"><path d="M893.5,592.9v-4l2,-1.6h4v4l-2,1.6zM893.5,588.9h4v4M897.5,588.9l2,-1.6" stroke-width="0.6"/></g>
<path d="M970,588.3v4l2.2,-2z" fill="#333"/>
<g fill="none" stroke="#333" stroke-width="0.7" stroke-linejoin="round"><rect x="512.5" y="343.5" width="6" height="6.5"/><path d="M516,340.5h5.5v6.5M518.5,343.5l2.5,-2.5M521,343v-2h-2" stroke-width="0.6"/></g>
<g fill="none" stroke="#333" stroke-width="0.7" stroke-linejoin="round"><path d="M527.5,350.2v-9.6h6a5,5 0 0 1 5,5v4.6z"/><path d="M529.5,348.2v-5.6h3.6a3,3 0 0 1 3,3v2.6z" stroke-width="0.5"/></g>
<g fill="none" stroke="#333" stroke-width="0.7" stroke-linejoin="round"><rect x="545.3" y="344.6" width="5.6" height="6"/><rect x="546.3" y="339.6" width="3.6" height="3.6"/><path d="M548.1,340.4v2.2M547.2,341.3l0.9,-0.9l0.9,0.9" stroke-width="0.5"/></g>
<g fill="none" stroke="#2f6fd0" stroke-width="0.7"><path d="M559.5,342.5l5.5,1.2l-0.8,5l-4.7,-0.4z"/><circle cx="559.5" cy="342.5" r="1.1" fill="#cce4f7"/><circle cx="565" cy="343.7" r="1.1" fill="#cce4f7"/><circle cx="564.2" cy="348.7" r="1.1" fill="#cce4f7"/><circle cx="559.5" cy="348.3" r="1.1" fill="#cce4f7"/></g><path d="M567.8,339.5v2.6M566.5,340.8h2.6" stroke="#223" stroke-width="0.6"/>
<g fill="none" stroke="#333" stroke-width="0.7" stroke-linejoin="round"><path d="M512.5,358.5l2,-2h5l-2,2zM512.5,358.5v2.4h5v-2.4M517.5,360.9l2,-2v-2.4"/></g>
<path d="M516.5,363.5h5M519,361v5M517.5,362.3l-1,1.2l1,1.2M520.5,362.3l1,1.2l-1,1.2M518,362l1,-1l1,1M518,365l1,1l1,-1" fill="none" stroke="#222" stroke-width="0.5"/>
<g fill="none" stroke="#333" stroke-width="0.7" stroke-linejoin="round"><path d="M527.5,359l2,-2h5l-2,2zM527.5,359v2.4h5v-2.4M532.5,361.4l2,-2v-2.4"/></g>
<path d="M531.5,365.5a3,2.4 0 0 0 5,-1.8M536.5,362.5v1.6h-1.6" fill="none" stroke="#222" stroke-width="0.6"/>
<g fill="none" stroke="#333" stroke-width="0.7" stroke-linejoin="round"><path d="M543,357.5l2,-2h5l-2,2zM543,357.5v2.4h5v-2.4M548,359.9l2,-2v-2.4"/></g>
<path d="M552.5,355.5l-8,11" stroke="#333" stroke-width="0.7"/><ellipse cx="549.5" cy="364.5" rx="3.2" ry="1.6" fill="none" stroke="#555" stroke-width="0.6"/>
<g fill="none" stroke="#333" stroke-width="0.7" stroke-linejoin="round"><path d="M558.5,358l2,-2h5l-2,2zM558.5,358v2.4h5v-2.4M563.5,360.4l2,-2v-2.4"/></g>
<ellipse cx="566" cy="363.5" rx="3.4" ry="2" fill="#e4e4e4" stroke="#999" stroke-width="0.6"/><ellipse cx="564.5" cy="365" rx="3.4" ry="2" fill="none" stroke="#aaa" stroke-width="0.5"/>
</svg>
</div>
</body></html>
